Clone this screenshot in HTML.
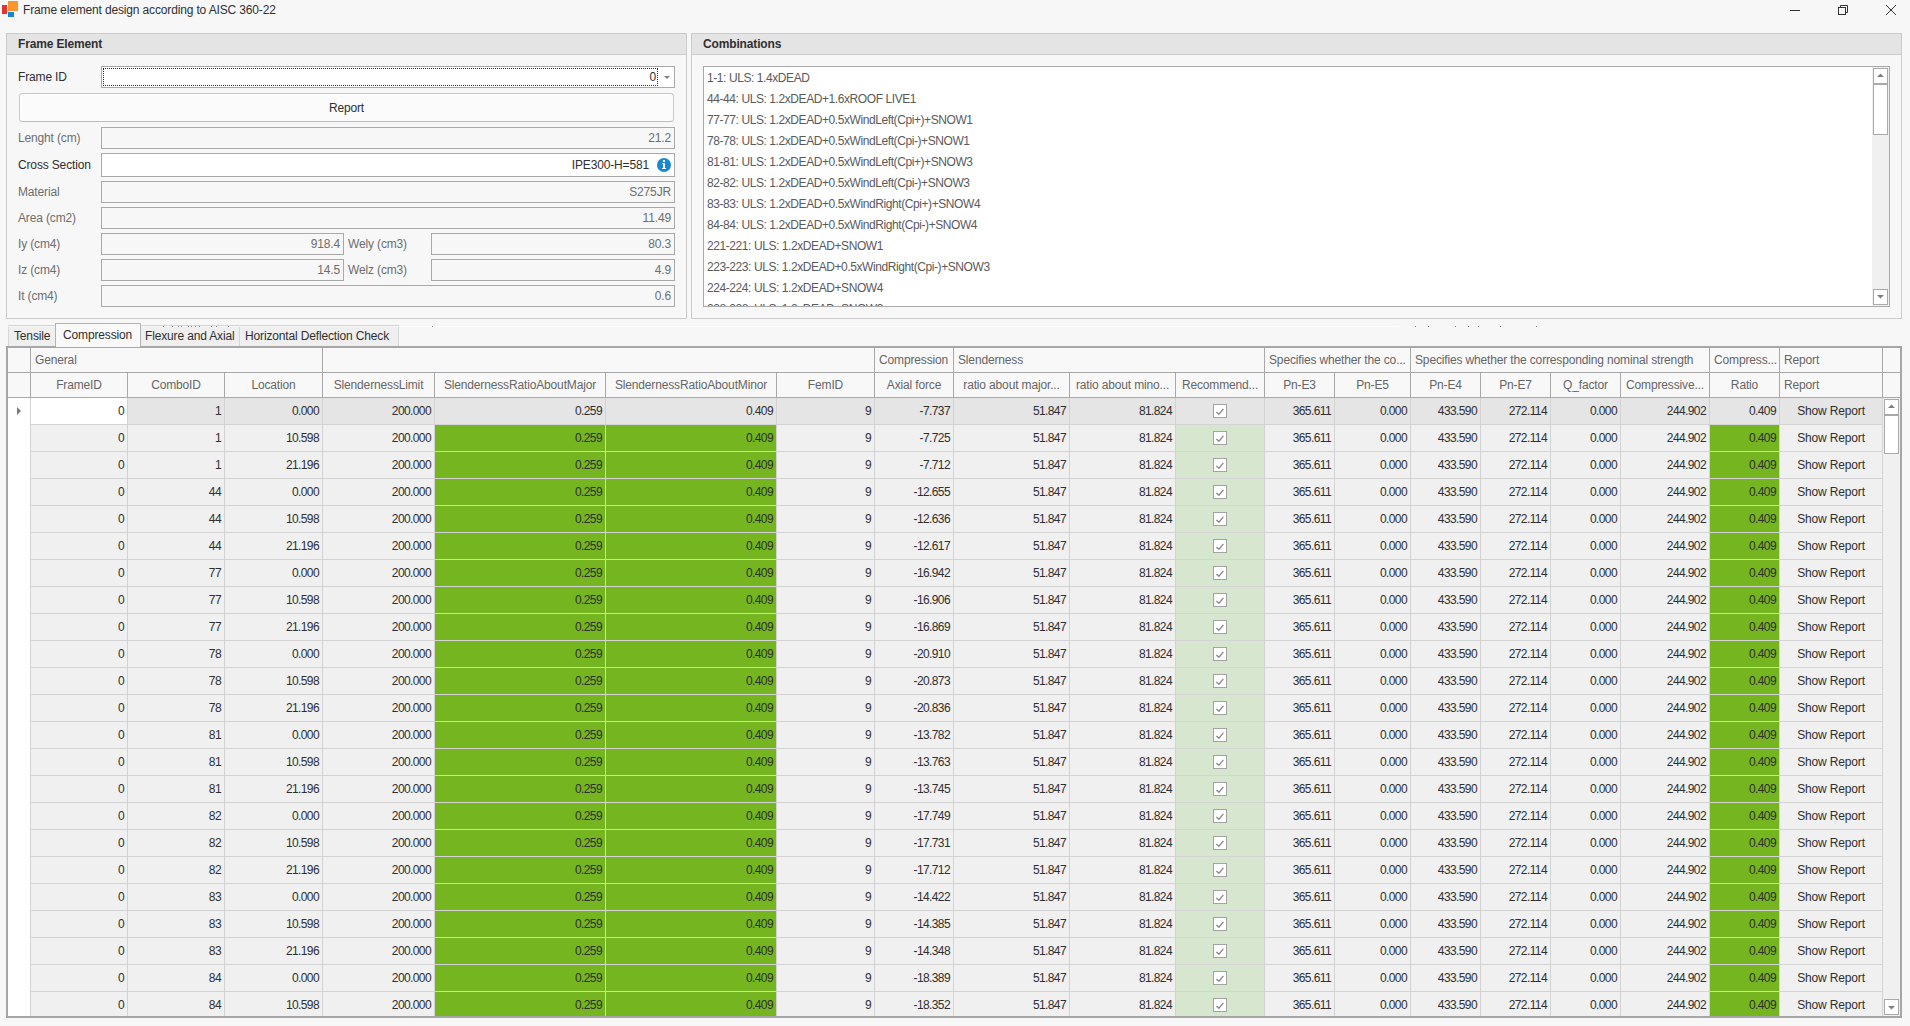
<!DOCTYPE html>
<html><head><meta charset="utf-8"><title>Frame element design according to AISC 360-22</title>
<style>
html,body{margin:0;padding:0;}
body{width:1910px;height:1026px;overflow:hidden;position:relative;background:#f7f7f7;font-family:"Liberation Sans",sans-serif;font-size:12px;color:#2f2f2f;}
.r{position:absolute;}
.t{position:absolute;height:16px;line-height:16px;white-space:nowrap;overflow:visible;letter-spacing:-0.15px;}
.b{font-weight:bold;}
svg{position:absolute;}
</style></head><body>

<div class="r" style="left:2px;top:5px;width:5px;height:9px;background:#e8312f;"></div>
<div class="r" style="left:8px;top:1px;width:10px;height:10px;background:#f7962f;"></div>
<div class="r" style="left:8px;top:12px;width:6px;height:5px;background:#1b86cb;"></div>
<div class="t " style="top:2px;left:23px;color:#303030;">Frame element design according to AISC 360-22</div>
<div class="r" style="left:1790px;top:10px;width:10px;height:1px;background:#333333;"></div>
<svg style="left:1830px;top:0px" width="80" height="30" viewBox="0 0 80 30"><rect x="8.5" y="7.5" width="7" height="7" fill="none" stroke="#333" stroke-width="1"/><path d="M10.5 7.5 V5.5 H17.5 V12.5 H15.5" fill="none" stroke="#333" stroke-width="1"/><path d="M56 5 L66 15 M66 5 L56 15" stroke="#333" stroke-width="1"/></svg>
<div class="r" style="left:6px;top:33px;width:681px;height:286px;background:#f7f7f7;box-sizing:border-box;border:1px solid #cbcbcb;"></div>
<div class="r" style="left:7px;top:34px;width:679px;height:20px;background:#e4e4e4;"></div>
<div class="r" style="left:7px;top:54px;width:679px;height:1px;background:#cbcbcb;"></div>
<div class="t b" style="top:36px;left:18px;color:#303030;">Frame Element</div>
<div class="t " style="top:69px;left:18px;color:#2f2f2f;">Frame ID</div>
<div class="r" style="left:101px;top:66px;width:574px;height:22px;background:#ffffff;box-sizing:border-box;border:1px solid #a9a9a9;"></div>
<div class="r" style="left:103px;top:68px;width:555px;height:18px;box-sizing:border-box;border:1px dotted #333333;"></div>
<div class="t " style="top:69px;left:616px;width:40px;text-align:right;color:#2f2f2f;">0</div>
<svg style="left:663px;top:75px" width="8" height="5"><path d="M1 1 H7 L4 4 Z" fill="#808080"/></svg>
<div class="r" style="left:19px;top:93px;width:655px;height:29px;background:#fbfbfb;box-sizing:border-box;border:1px solid #c8c8c8;border-radius:3.5px;border-bottom-color:#bcbcbc;box-shadow:inset 1px 1px 0 #ffffff;"></div>
<div class="t " style="top:100px;left:19px;width:655px;text-align:center;color:#2f2f2f;">Report</div>
<div class="t " style="top:130px;left:18px;color:#6e6e6e;">Lenght (cm)</div>
<div class="r" style="left:101px;top:127px;width:574px;height:22px;background:#f7f7f7;box-sizing:border-box;border:1px solid #a9a9a9;"></div>
<div class="t " style="top:130px;left:471px;width:200px;text-align:right;color:#6e6e6e;">21.2</div>
<div class="t " style="top:157px;left:18px;color:#2f2f2f;">Cross Section</div>
<div class="r" style="left:101px;top:153px;width:574px;height:24px;background:#ffffff;box-sizing:border-box;border:1px solid #a9a9a9;"></div>
<div class="t " style="top:157px;left:449px;width:200px;text-align:right;color:#2f2f2f;">IPE300-H=581</div>
<div class="t " style="top:184px;left:18px;color:#6e6e6e;">Material</div>
<div class="r" style="left:101px;top:181px;width:574px;height:22px;background:#f7f7f7;box-sizing:border-box;border:1px solid #a9a9a9;"></div>
<div class="t " style="top:184px;left:471px;width:200px;text-align:right;color:#6e6e6e;">S275JR</div>
<div class="t " style="top:210px;left:18px;color:#6e6e6e;">Area (cm2)</div>
<div class="r" style="left:101px;top:207px;width:574px;height:22px;background:#f7f7f7;box-sizing:border-box;border:1px solid #a9a9a9;"></div>
<div class="t " style="top:210px;left:471px;width:200px;text-align:right;color:#6e6e6e;">11.49</div>
<div class="t " style="top:288px;left:18px;color:#6e6e6e;">It (cm4)</div>
<div class="r" style="left:101px;top:285px;width:574px;height:22px;background:#f7f7f7;box-sizing:border-box;border:1px solid #a9a9a9;"></div>
<div class="t " style="top:288px;left:471px;width:200px;text-align:right;color:#6e6e6e;">0.6</div>
<svg style="left:657px;top:158px" width="14" height="14" viewBox="0 0 14 14"><circle cx="7" cy="7" r="7" fill="#1b87d0"/><rect x="6" y="2" width="2" height="2" fill="#fff"/><path d="M5 5 H8 V10 H9 V11 H5 V10 H6 V6 H5 Z" fill="#fff"/></svg>
<div class="t " style="top:236px;left:18px;color:#6e6e6e;">Iy (cm4)</div>
<div class="r" style="left:101px;top:233px;width:243px;height:22px;background:#f7f7f7;box-sizing:border-box;border:1px solid #a9a9a9;"></div>
<div class="t " style="top:236px;left:240px;width:100px;text-align:right;color:#6e6e6e;">918.4</div>
<div class="t " style="top:236px;left:348px;color:#6e6e6e;">Wely (cm3)</div>
<div class="r" style="left:431px;top:233px;width:244px;height:22px;background:#f7f7f7;box-sizing:border-box;border:1px solid #a9a9a9;"></div>
<div class="t " style="top:236px;left:571px;width:100px;text-align:right;color:#6e6e6e;">80.3</div>
<div class="t " style="top:262px;left:18px;color:#6e6e6e;">Iz (cm4)</div>
<div class="r" style="left:101px;top:259px;width:243px;height:22px;background:#f7f7f7;box-sizing:border-box;border:1px solid #a9a9a9;"></div>
<div class="t " style="top:262px;left:240px;width:100px;text-align:right;color:#6e6e6e;">14.5</div>
<div class="t " style="top:262px;left:348px;color:#6e6e6e;">Welz (cm3)</div>
<div class="r" style="left:431px;top:259px;width:244px;height:22px;background:#f7f7f7;box-sizing:border-box;border:1px solid #a9a9a9;"></div>
<div class="t " style="top:262px;left:571px;width:100px;text-align:right;color:#6e6e6e;">4.9</div>
<div class="r" style="left:691px;top:33px;width:1211px;height:286px;background:#f7f7f7;box-sizing:border-box;border:1px solid #cbcbcb;"></div>
<div class="r" style="left:692px;top:34px;width:1209px;height:20px;background:#e4e4e4;"></div>
<div class="r" style="left:692px;top:54px;width:1209px;height:1px;background:#cbcbcb;"></div>
<div class="t b" style="top:36px;left:703px;color:#303030;">Combinations</div>
<div class="r" style="left:703px;top:66px;width:1187px;height:241px;background:#ffffff;box-sizing:border-box;border:1px solid #a9a9a9;"></div>
<div class="r" style="left:704px;top:67px;width:1168px;height:239px;overflow:hidden;">
<div class="t" style="left:3px;top:3px;color:#5a5a5a;letter-spacing:-0.42px;">1-1: ULS: 1.4xDEAD</div>
<div class="t" style="left:3px;top:24px;color:#5a5a5a;letter-spacing:-0.42px;">44-44: ULS: 1.2xDEAD+1.6xROOF LIVE1</div>
<div class="t" style="left:3px;top:45px;color:#5a5a5a;letter-spacing:-0.42px;">77-77: ULS: 1.2xDEAD+0.5xWindLeft(Cpi+)+SNOW1</div>
<div class="t" style="left:3px;top:66px;color:#5a5a5a;letter-spacing:-0.42px;">78-78: ULS: 1.2xDEAD+0.5xWindLeft(Cpi-)+SNOW1</div>
<div class="t" style="left:3px;top:87px;color:#5a5a5a;letter-spacing:-0.42px;">81-81: ULS: 1.2xDEAD+0.5xWindLeft(Cpi+)+SNOW3</div>
<div class="t" style="left:3px;top:108px;color:#5a5a5a;letter-spacing:-0.42px;">82-82: ULS: 1.2xDEAD+0.5xWindLeft(Cpi-)+SNOW3</div>
<div class="t" style="left:3px;top:129px;color:#5a5a5a;letter-spacing:-0.42px;">83-83: ULS: 1.2xDEAD+0.5xWindRight(Cpi+)+SNOW4</div>
<div class="t" style="left:3px;top:150px;color:#5a5a5a;letter-spacing:-0.42px;">84-84: ULS: 1.2xDEAD+0.5xWindRight(Cpi-)+SNOW4</div>
<div class="t" style="left:3px;top:171px;color:#5a5a5a;letter-spacing:-0.42px;">221-221: ULS: 1.2xDEAD+SNOW1</div>
<div class="t" style="left:3px;top:192px;color:#5a5a5a;letter-spacing:-0.42px;">223-223: ULS: 1.2xDEAD+0.5xWindRight(Cpi-)+SNOW3</div>
<div class="t" style="left:3px;top:213px;color:#5a5a5a;letter-spacing:-0.42px;">224-224: ULS: 1.2xDEAD+SNOW4</div>
<div class="t" style="left:3px;top:234px;color:#5a5a5a;letter-spacing:-0.42px;">228-228: ULS: 1.2xDEAD+SNOW3</div>
</div>
<div class="r" style="left:1872px;top:67px;width:17px;height:239px;background:#f0f0f0;"></div>
<div class="r" style="left:1873px;top:68px;width:15px;height:16px;background:#ffffff;box-sizing:border-box;border:1px solid #a9a9a9;"></div>
<div class="r" style="left:1873px;top:84px;width:15px;height:51px;background:#ffffff;box-sizing:border-box;border:1px solid #a9a9a9;"></div>
<div class="r" style="left:1873px;top:289px;width:15px;height:16px;background:#ffffff;box-sizing:border-box;border:1px solid #a9a9a9;"></div>
<svg style="left:1876px;top:72px" width="10" height="6"><path d="M1 5 H8 L4.5 1.5 Z" fill="#808080"/></svg>
<svg style="left:1876px;top:294px" width="10" height="6"><path d="M1 1 H8 L4.5 4.5 Z" fill="#808080"/></svg>
<div class="r" style="left:8px;top:325px;width:391px;height:1px;background:#d4d4d4;"></div>
<div class="r" style="left:399px;top:326px;width:1000px;height:1px;background:#fdfdfd;"></div>
<div class="r" style="left:163px;top:326px;width:1px;height:1px;background:#8a8a8a;"></div>
<div class="r" style="left:172px;top:326px;width:1px;height:1px;background:#8a8a8a;"></div>
<div class="r" style="left:178px;top:326px;width:1px;height:1px;background:#8a8a8a;"></div>
<div class="r" style="left:181px;top:326px;width:1px;height:1px;background:#8a8a8a;"></div>
<div class="r" style="left:188px;top:326px;width:1px;height:1px;background:#8a8a8a;"></div>
<div class="r" style="left:191px;top:326px;width:1px;height:1px;background:#8a8a8a;"></div>
<div class="r" style="left:195px;top:326px;width:1px;height:1px;background:#8a8a8a;"></div>
<div class="r" style="left:199px;top:326px;width:1px;height:1px;background:#8a8a8a;"></div>
<div class="r" style="left:211px;top:326px;width:1px;height:1px;background:#8a8a8a;"></div>
<div class="r" style="left:216px;top:326px;width:1px;height:1px;background:#8a8a8a;"></div>
<div class="r" style="left:228px;top:326px;width:1px;height:1px;background:#8a8a8a;"></div>
<div class="r" style="left:432px;top:326px;width:1px;height:1px;background:#8a8a8a;"></div>
<div class="r" style="left:1415px;top:326px;width:1px;height:1px;background:#8a8a8a;"></div>
<div class="r" style="left:1428px;top:326px;width:1px;height:1px;background:#8a8a8a;"></div>
<div class="r" style="left:1455px;top:326px;width:1px;height:1px;background:#8a8a8a;"></div>
<div class="r" style="left:1468px;top:326px;width:1px;height:1px;background:#8a8a8a;"></div>
<div class="r" style="left:1478px;top:326px;width:1px;height:1px;background:#8a8a8a;"></div>
<div class="r" style="left:1500px;top:326px;width:1px;height:1px;background:#8a8a8a;"></div>
<div class="r" style="left:1536px;top:326px;width:1px;height:1px;background:#8a8a8a;"></div>
<div class="r" style="left:8px;top:327px;width:48px;height:20px;background:#efefef;box-sizing:border-box;border:1px solid #d6d6d6;border-bottom:none;border-top:none;"></div>
<div class="t " style="top:328px;left:14px;color:#2f2f2f;">Tensile</div>
<div class="r" style="left:140px;top:327px;width:100px;height:20px;background:#efefef;box-sizing:border-box;border:1px solid #d6d6d6;border-bottom:none;border-left:none;border-top:none;"></div>
<div class="t " style="top:328px;left:145px;color:#2f2f2f;">Flexure and Axial</div>
<div class="r" style="left:239px;top:327px;width:160px;height:20px;background:#efefef;box-sizing:border-box;border:1px solid #d6d6d6;border-bottom:none;border-top:none;"></div>
<div class="t " style="top:328px;left:245px;color:#2f2f2f;">Horizontal Deflection Check</div>
<div class="r" style="left:55px;top:323px;width:86px;height:25px;background:#f9f9f9;box-sizing:border-box;border:1px solid #b4b4b4;border-bottom:none;"></div>
<div class="t " style="top:327px;left:63px;color:#2f2f2f;">Compression</div>
<div class="r" style="left:6px;top:346px;width:1896px;height:672px;box-sizing:border-box;border:2px solid #a6a6a6;background:#ffffff;"></div>
<div class="r" style="left:56px;top:346px;width:84px;height:1px;background:#f9f9f9;"></div>
<div class="r" style="left:8px;top:348px;width:1892px;height:49px;background:#f8f8f8;"></div>
<div class="r" style="left:8px;top:372px;width:1892px;height:1px;background:#a9a9a9;"></div>
<div class="r" style="left:8px;top:397px;width:1892px;height:1px;background:#a9a9a9;"></div>
<div class="r" style="left:30px;top:348px;width:1px;height:24px;background:#a9a9a9;"></div>
<div class="r" style="left:322px;top:348px;width:1px;height:24px;background:#a9a9a9;"></div>
<div class="t " style="top:352px;left:35px;color:#666666;">General</div>
<div class="r" style="left:874px;top:348px;width:1px;height:24px;background:#a9a9a9;"></div>
<div class="r" style="left:953px;top:348px;width:1px;height:24px;background:#a9a9a9;"></div>
<div class="t " style="top:352px;left:879px;color:#666666;">Compression</div>
<div class="r" style="left:1264px;top:348px;width:1px;height:24px;background:#a9a9a9;"></div>
<div class="t " style="top:352px;left:958px;color:#666666;">Slenderness</div>
<div class="r" style="left:1410px;top:348px;width:1px;height:24px;background:#a9a9a9;"></div>
<div class="t " style="top:352px;left:1269px;color:#666666;">Specifies whether the co...</div>
<div class="r" style="left:1709px;top:348px;width:1px;height:24px;background:#a9a9a9;"></div>
<div class="t " style="top:352px;left:1415px;color:#666666;">Specifies whether the corresponding nominal strength</div>
<div class="r" style="left:1779px;top:348px;width:1px;height:24px;background:#a9a9a9;"></div>
<div class="t " style="top:352px;left:1714px;color:#666666;">Compress...</div>
<div class="r" style="left:1882px;top:348px;width:1px;height:24px;background:#a9a9a9;"></div>
<div class="t " style="top:352px;left:1784px;color:#666666;">Report</div>
<div class="r" style="left:30px;top:373px;width:1px;height:24px;background:#a9a9a9;"></div>
<div class="r" style="left:127px;top:373px;width:1px;height:24px;background:#a9a9a9;"></div>
<div class="r" style="left:224px;top:373px;width:1px;height:24px;background:#a9a9a9;"></div>
<div class="r" style="left:322px;top:373px;width:1px;height:24px;background:#a9a9a9;"></div>
<div class="r" style="left:434px;top:373px;width:1px;height:24px;background:#a9a9a9;"></div>
<div class="r" style="left:605px;top:373px;width:1px;height:24px;background:#a9a9a9;"></div>
<div class="r" style="left:776px;top:373px;width:1px;height:24px;background:#a9a9a9;"></div>
<div class="r" style="left:874px;top:373px;width:1px;height:24px;background:#a9a9a9;"></div>
<div class="r" style="left:953px;top:373px;width:1px;height:24px;background:#a9a9a9;"></div>
<div class="r" style="left:1069px;top:373px;width:1px;height:24px;background:#a9a9a9;"></div>
<div class="r" style="left:1175px;top:373px;width:1px;height:24px;background:#a9a9a9;"></div>
<div class="r" style="left:1264px;top:373px;width:1px;height:24px;background:#a9a9a9;"></div>
<div class="r" style="left:1334px;top:373px;width:1px;height:24px;background:#a9a9a9;"></div>
<div class="r" style="left:1410px;top:373px;width:1px;height:24px;background:#a9a9a9;"></div>
<div class="r" style="left:1480px;top:373px;width:1px;height:24px;background:#a9a9a9;"></div>
<div class="r" style="left:1550px;top:373px;width:1px;height:24px;background:#a9a9a9;"></div>
<div class="r" style="left:1620px;top:373px;width:1px;height:24px;background:#a9a9a9;"></div>
<div class="r" style="left:1709px;top:373px;width:1px;height:24px;background:#a9a9a9;"></div>
<div class="r" style="left:1779px;top:373px;width:1px;height:24px;background:#a9a9a9;"></div>
<div class="r" style="left:1882px;top:373px;width:1px;height:24px;background:#a9a9a9;"></div>
<div class="t " style="top:377px;left:31px;width:96px;text-align:center;color:#666666;">FrameID</div>
<div class="t " style="top:377px;left:128px;width:96px;text-align:center;color:#666666;">ComboID</div>
<div class="t " style="top:377px;left:225px;width:97px;text-align:center;color:#666666;">Location</div>
<div class="t " style="top:377px;left:323px;width:111px;text-align:center;color:#666666;">SlendernessLimit</div>
<div class="t " style="top:377px;left:435px;width:170px;text-align:center;color:#666666;">SlendernessRatioAboutMajor</div>
<div class="t " style="top:377px;left:606px;width:170px;text-align:center;color:#666666;">SlendernessRatioAboutMinor</div>
<div class="t " style="top:377px;left:777px;width:97px;text-align:center;color:#666666;">FemID</div>
<div class="t " style="top:377px;left:875px;width:78px;text-align:center;color:#666666;">Axial force</div>
<div class="t " style="top:377px;left:954px;width:115px;text-align:center;color:#666666;">ratio about major...</div>
<div class="t " style="top:377px;left:1070px;width:105px;text-align:center;color:#666666;">ratio about mino...</div>
<div class="t " style="top:377px;left:1176px;width:88px;text-align:center;color:#666666;">Recommend...</div>
<div class="t " style="top:377px;left:1265px;width:69px;text-align:center;color:#666666;">Pn-E3</div>
<div class="t " style="top:377px;left:1335px;width:75px;text-align:center;color:#666666;">Pn-E5</div>
<div class="t " style="top:377px;left:1411px;width:69px;text-align:center;color:#666666;">Pn-E4</div>
<div class="t " style="top:377px;left:1481px;width:69px;text-align:center;color:#666666;">Pn-E7</div>
<div class="t " style="top:377px;left:1551px;width:69px;text-align:center;color:#666666;">Q_factor</div>
<div class="t " style="top:377px;left:1621px;width:88px;text-align:center;color:#666666;">Compressive...</div>
<div class="t " style="top:377px;left:1710px;width:69px;text-align:center;color:#666666;">Ratio</div>
<div class="t " style="top:377px;left:1784px;color:#666666;">Report</div>
<div class="r" style="left:8px;top:398px;width:22px;height:618px;background:#ffffff;"></div>
<div class="r" style="left:31px;top:398px;width:1851px;height:618px;background:#f0f0f0;"></div>
<div class="r" style="left:1883px;top:398px;width:17px;height:618px;background:#f0f0f0;"></div>
<div class="r" style="left:31px;top:398px;width:1851px;height:26px;background:#e5e5e5;"></div>
<div class="r" style="left:31px;top:398px;width:96px;height:26px;background:#ffffff;"></div>
<div class="r" style="left:435px;top:425px;width:170px;height:591px;background:#74b520;"></div>
<div class="r" style="left:606px;top:425px;width:170px;height:591px;background:#74b520;"></div>
<div class="r" style="left:1710px;top:425px;width:69px;height:591px;background:#74b520;"></div>
<div class="r" style="left:1176px;top:425px;width:88px;height:591px;background:#d7e6cf;"></div>
<div class="r" style="left:30px;top:398px;width:1px;height:618px;background:#d3d3d3;"></div>
<div class="r" style="left:127px;top:398px;width:1px;height:618px;background:#d3d3d3;"></div>
<div class="r" style="left:224px;top:398px;width:1px;height:618px;background:#d3d3d3;"></div>
<div class="r" style="left:322px;top:398px;width:1px;height:618px;background:#d3d3d3;"></div>
<div class="r" style="left:434px;top:398px;width:1px;height:618px;background:#d3d3d3;"></div>
<div class="r" style="left:605px;top:398px;width:1px;height:618px;background:#d3d3d3;"></div>
<div class="r" style="left:776px;top:398px;width:1px;height:618px;background:#d3d3d3;"></div>
<div class="r" style="left:874px;top:398px;width:1px;height:618px;background:#d3d3d3;"></div>
<div class="r" style="left:953px;top:398px;width:1px;height:618px;background:#d3d3d3;"></div>
<div class="r" style="left:1069px;top:398px;width:1px;height:618px;background:#d3d3d3;"></div>
<div class="r" style="left:1175px;top:398px;width:1px;height:618px;background:#d3d3d3;"></div>
<div class="r" style="left:1264px;top:398px;width:1px;height:618px;background:#d3d3d3;"></div>
<div class="r" style="left:1334px;top:398px;width:1px;height:618px;background:#d3d3d3;"></div>
<div class="r" style="left:1410px;top:398px;width:1px;height:618px;background:#d3d3d3;"></div>
<div class="r" style="left:1480px;top:398px;width:1px;height:618px;background:#d3d3d3;"></div>
<div class="r" style="left:1550px;top:398px;width:1px;height:618px;background:#d3d3d3;"></div>
<div class="r" style="left:1620px;top:398px;width:1px;height:618px;background:#d3d3d3;"></div>
<div class="r" style="left:1709px;top:398px;width:1px;height:618px;background:#d3d3d3;"></div>
<div class="r" style="left:1779px;top:398px;width:1px;height:618px;background:#d3d3d3;"></div>
<div class="r" style="left:1882px;top:398px;width:1px;height:618px;background:#d3d3d3;"></div>
<div class="r" style="left:31px;top:424px;width:1851px;height:1px;background:#d3d3d3;"></div>
<div class="r" style="left:31px;top:451px;width:1851px;height:1px;background:#d3d3d3;"></div>
<div class="r" style="left:31px;top:478px;width:1851px;height:1px;background:#d3d3d3;"></div>
<div class="r" style="left:31px;top:505px;width:1851px;height:1px;background:#d3d3d3;"></div>
<div class="r" style="left:31px;top:532px;width:1851px;height:1px;background:#d3d3d3;"></div>
<div class="r" style="left:31px;top:559px;width:1851px;height:1px;background:#d3d3d3;"></div>
<div class="r" style="left:31px;top:586px;width:1851px;height:1px;background:#d3d3d3;"></div>
<div class="r" style="left:31px;top:613px;width:1851px;height:1px;background:#d3d3d3;"></div>
<div class="r" style="left:31px;top:640px;width:1851px;height:1px;background:#d3d3d3;"></div>
<div class="r" style="left:31px;top:667px;width:1851px;height:1px;background:#d3d3d3;"></div>
<div class="r" style="left:31px;top:694px;width:1851px;height:1px;background:#d3d3d3;"></div>
<div class="r" style="left:31px;top:721px;width:1851px;height:1px;background:#d3d3d3;"></div>
<div class="r" style="left:31px;top:748px;width:1851px;height:1px;background:#d3d3d3;"></div>
<div class="r" style="left:31px;top:775px;width:1851px;height:1px;background:#d3d3d3;"></div>
<div class="r" style="left:31px;top:802px;width:1851px;height:1px;background:#d3d3d3;"></div>
<div class="r" style="left:31px;top:829px;width:1851px;height:1px;background:#d3d3d3;"></div>
<div class="r" style="left:31px;top:856px;width:1851px;height:1px;background:#d3d3d3;"></div>
<div class="r" style="left:31px;top:883px;width:1851px;height:1px;background:#d3d3d3;"></div>
<div class="r" style="left:31px;top:910px;width:1851px;height:1px;background:#d3d3d3;"></div>
<div class="r" style="left:31px;top:937px;width:1851px;height:1px;background:#d3d3d3;"></div>
<div class="r" style="left:31px;top:964px;width:1851px;height:1px;background:#d3d3d3;"></div>
<div class="r" style="left:31px;top:991px;width:1851px;height:1px;background:#d3d3d3;"></div>
<div class="t " style="top:403px;left:29px;width:95px;text-align:right;color:#2f2f2f;letter-spacing:-0.6px;margin-right:-0.5px;">0</div>
<div class="t " style="top:403px;left:126px;width:95px;text-align:right;color:#2f2f2f;letter-spacing:-0.6px;margin-right:-0.5px;">1</div>
<div class="t " style="top:403px;left:223px;width:96px;text-align:right;color:#2f2f2f;letter-spacing:-0.6px;margin-right:-0.5px;">0.000</div>
<div class="t " style="top:403px;left:321px;width:110px;text-align:right;color:#2f2f2f;letter-spacing:-0.6px;margin-right:-0.5px;">200.000</div>
<div class="t " style="top:403px;left:433px;width:169px;text-align:right;color:#2f2f2f;letter-spacing:-0.6px;margin-right:-0.5px;">0.259</div>
<div class="t " style="top:403px;left:604px;width:169px;text-align:right;color:#2f2f2f;letter-spacing:-0.6px;margin-right:-0.5px;">0.409</div>
<div class="t " style="top:403px;left:775px;width:96px;text-align:right;color:#2f2f2f;letter-spacing:-0.6px;margin-right:-0.5px;">9</div>
<div class="t " style="top:403px;left:873px;width:77px;text-align:right;color:#2f2f2f;letter-spacing:-0.6px;margin-right:-0.5px;">-7.737</div>
<div class="t " style="top:403px;left:952px;width:114px;text-align:right;color:#2f2f2f;letter-spacing:-0.6px;margin-right:-0.5px;">51.847</div>
<div class="t " style="top:403px;left:1068px;width:104px;text-align:right;color:#2f2f2f;letter-spacing:-0.6px;margin-right:-0.5px;">81.824</div>
<div class="r" style="left:1213px;top:404px;width:14px;height:14px;box-sizing:border-box;border:1px solid #a3a3a3;background:#fff;"></div>
<svg style="left:1213px;top:404px" width="14" height="14"><path d="M3.4 7.9 L5.9 10.2 L10.4 4.8" fill="none" stroke="#8a8a8a" stroke-width="1.3"/></svg>
<div class="t " style="top:403px;left:1263px;width:68px;text-align:right;color:#2f2f2f;letter-spacing:-0.6px;margin-right:-0.5px;">365.611</div>
<div class="t " style="top:403px;left:1333px;width:74px;text-align:right;color:#2f2f2f;letter-spacing:-0.6px;margin-right:-0.5px;">0.000</div>
<div class="t " style="top:403px;left:1409px;width:68px;text-align:right;color:#2f2f2f;letter-spacing:-0.6px;margin-right:-0.5px;">433.590</div>
<div class="t " style="top:403px;left:1479px;width:68px;text-align:right;color:#2f2f2f;letter-spacing:-0.6px;margin-right:-0.5px;">272.114</div>
<div class="t " style="top:403px;left:1549px;width:68px;text-align:right;color:#2f2f2f;letter-spacing:-0.6px;margin-right:-0.5px;">0.000</div>
<div class="t " style="top:403px;left:1619px;width:87px;text-align:right;color:#2f2f2f;letter-spacing:-0.6px;margin-right:-0.5px;">244.902</div>
<div class="t " style="top:403px;left:1708px;width:68px;text-align:right;color:#2f2f2f;letter-spacing:-0.6px;margin-right:-0.5px;">0.409</div>
<div class="t " style="top:403px;left:1780px;width:102px;text-align:center;color:#2f2f2f;">Show Report</div>
<div class="t " style="top:430px;left:29px;width:95px;text-align:right;color:#2f2f2f;letter-spacing:-0.6px;margin-right:-0.5px;">0</div>
<div class="t " style="top:430px;left:126px;width:95px;text-align:right;color:#2f2f2f;letter-spacing:-0.6px;margin-right:-0.5px;">1</div>
<div class="t " style="top:430px;left:223px;width:96px;text-align:right;color:#2f2f2f;letter-spacing:-0.6px;margin-right:-0.5px;">10.598</div>
<div class="t " style="top:430px;left:321px;width:110px;text-align:right;color:#2f2f2f;letter-spacing:-0.6px;margin-right:-0.5px;">200.000</div>
<div class="t " style="top:430px;left:433px;width:169px;text-align:right;color:#2f2f2f;letter-spacing:-0.6px;margin-right:-0.5px;">0.259</div>
<div class="t " style="top:430px;left:604px;width:169px;text-align:right;color:#2f2f2f;letter-spacing:-0.6px;margin-right:-0.5px;">0.409</div>
<div class="t " style="top:430px;left:775px;width:96px;text-align:right;color:#2f2f2f;letter-spacing:-0.6px;margin-right:-0.5px;">9</div>
<div class="t " style="top:430px;left:873px;width:77px;text-align:right;color:#2f2f2f;letter-spacing:-0.6px;margin-right:-0.5px;">-7.725</div>
<div class="t " style="top:430px;left:952px;width:114px;text-align:right;color:#2f2f2f;letter-spacing:-0.6px;margin-right:-0.5px;">51.847</div>
<div class="t " style="top:430px;left:1068px;width:104px;text-align:right;color:#2f2f2f;letter-spacing:-0.6px;margin-right:-0.5px;">81.824</div>
<div class="r" style="left:1213px;top:431px;width:14px;height:14px;box-sizing:border-box;border:1px solid #a3a3a3;background:#fff;"></div>
<svg style="left:1213px;top:431px" width="14" height="14"><path d="M3.4 7.9 L5.9 10.2 L10.4 4.8" fill="none" stroke="#8a8a8a" stroke-width="1.3"/></svg>
<div class="t " style="top:430px;left:1263px;width:68px;text-align:right;color:#2f2f2f;letter-spacing:-0.6px;margin-right:-0.5px;">365.611</div>
<div class="t " style="top:430px;left:1333px;width:74px;text-align:right;color:#2f2f2f;letter-spacing:-0.6px;margin-right:-0.5px;">0.000</div>
<div class="t " style="top:430px;left:1409px;width:68px;text-align:right;color:#2f2f2f;letter-spacing:-0.6px;margin-right:-0.5px;">433.590</div>
<div class="t " style="top:430px;left:1479px;width:68px;text-align:right;color:#2f2f2f;letter-spacing:-0.6px;margin-right:-0.5px;">272.114</div>
<div class="t " style="top:430px;left:1549px;width:68px;text-align:right;color:#2f2f2f;letter-spacing:-0.6px;margin-right:-0.5px;">0.000</div>
<div class="t " style="top:430px;left:1619px;width:87px;text-align:right;color:#2f2f2f;letter-spacing:-0.6px;margin-right:-0.5px;">244.902</div>
<div class="t " style="top:430px;left:1708px;width:68px;text-align:right;color:#2f2f2f;letter-spacing:-0.6px;margin-right:-0.5px;">0.409</div>
<div class="t " style="top:430px;left:1780px;width:102px;text-align:center;color:#2f2f2f;">Show Report</div>
<div class="t " style="top:457px;left:29px;width:95px;text-align:right;color:#2f2f2f;letter-spacing:-0.6px;margin-right:-0.5px;">0</div>
<div class="t " style="top:457px;left:126px;width:95px;text-align:right;color:#2f2f2f;letter-spacing:-0.6px;margin-right:-0.5px;">1</div>
<div class="t " style="top:457px;left:223px;width:96px;text-align:right;color:#2f2f2f;letter-spacing:-0.6px;margin-right:-0.5px;">21.196</div>
<div class="t " style="top:457px;left:321px;width:110px;text-align:right;color:#2f2f2f;letter-spacing:-0.6px;margin-right:-0.5px;">200.000</div>
<div class="t " style="top:457px;left:433px;width:169px;text-align:right;color:#2f2f2f;letter-spacing:-0.6px;margin-right:-0.5px;">0.259</div>
<div class="t " style="top:457px;left:604px;width:169px;text-align:right;color:#2f2f2f;letter-spacing:-0.6px;margin-right:-0.5px;">0.409</div>
<div class="t " style="top:457px;left:775px;width:96px;text-align:right;color:#2f2f2f;letter-spacing:-0.6px;margin-right:-0.5px;">9</div>
<div class="t " style="top:457px;left:873px;width:77px;text-align:right;color:#2f2f2f;letter-spacing:-0.6px;margin-right:-0.5px;">-7.712</div>
<div class="t " style="top:457px;left:952px;width:114px;text-align:right;color:#2f2f2f;letter-spacing:-0.6px;margin-right:-0.5px;">51.847</div>
<div class="t " style="top:457px;left:1068px;width:104px;text-align:right;color:#2f2f2f;letter-spacing:-0.6px;margin-right:-0.5px;">81.824</div>
<div class="r" style="left:1213px;top:458px;width:14px;height:14px;box-sizing:border-box;border:1px solid #a3a3a3;background:#fff;"></div>
<svg style="left:1213px;top:458px" width="14" height="14"><path d="M3.4 7.9 L5.9 10.2 L10.4 4.8" fill="none" stroke="#8a8a8a" stroke-width="1.3"/></svg>
<div class="t " style="top:457px;left:1263px;width:68px;text-align:right;color:#2f2f2f;letter-spacing:-0.6px;margin-right:-0.5px;">365.611</div>
<div class="t " style="top:457px;left:1333px;width:74px;text-align:right;color:#2f2f2f;letter-spacing:-0.6px;margin-right:-0.5px;">0.000</div>
<div class="t " style="top:457px;left:1409px;width:68px;text-align:right;color:#2f2f2f;letter-spacing:-0.6px;margin-right:-0.5px;">433.590</div>
<div class="t " style="top:457px;left:1479px;width:68px;text-align:right;color:#2f2f2f;letter-spacing:-0.6px;margin-right:-0.5px;">272.114</div>
<div class="t " style="top:457px;left:1549px;width:68px;text-align:right;color:#2f2f2f;letter-spacing:-0.6px;margin-right:-0.5px;">0.000</div>
<div class="t " style="top:457px;left:1619px;width:87px;text-align:right;color:#2f2f2f;letter-spacing:-0.6px;margin-right:-0.5px;">244.902</div>
<div class="t " style="top:457px;left:1708px;width:68px;text-align:right;color:#2f2f2f;letter-spacing:-0.6px;margin-right:-0.5px;">0.409</div>
<div class="t " style="top:457px;left:1780px;width:102px;text-align:center;color:#2f2f2f;">Show Report</div>
<div class="t " style="top:484px;left:29px;width:95px;text-align:right;color:#2f2f2f;letter-spacing:-0.6px;margin-right:-0.5px;">0</div>
<div class="t " style="top:484px;left:126px;width:95px;text-align:right;color:#2f2f2f;letter-spacing:-0.6px;margin-right:-0.5px;">44</div>
<div class="t " style="top:484px;left:223px;width:96px;text-align:right;color:#2f2f2f;letter-spacing:-0.6px;margin-right:-0.5px;">0.000</div>
<div class="t " style="top:484px;left:321px;width:110px;text-align:right;color:#2f2f2f;letter-spacing:-0.6px;margin-right:-0.5px;">200.000</div>
<div class="t " style="top:484px;left:433px;width:169px;text-align:right;color:#2f2f2f;letter-spacing:-0.6px;margin-right:-0.5px;">0.259</div>
<div class="t " style="top:484px;left:604px;width:169px;text-align:right;color:#2f2f2f;letter-spacing:-0.6px;margin-right:-0.5px;">0.409</div>
<div class="t " style="top:484px;left:775px;width:96px;text-align:right;color:#2f2f2f;letter-spacing:-0.6px;margin-right:-0.5px;">9</div>
<div class="t " style="top:484px;left:873px;width:77px;text-align:right;color:#2f2f2f;letter-spacing:-0.6px;margin-right:-0.5px;">-12.655</div>
<div class="t " style="top:484px;left:952px;width:114px;text-align:right;color:#2f2f2f;letter-spacing:-0.6px;margin-right:-0.5px;">51.847</div>
<div class="t " style="top:484px;left:1068px;width:104px;text-align:right;color:#2f2f2f;letter-spacing:-0.6px;margin-right:-0.5px;">81.824</div>
<div class="r" style="left:1213px;top:485px;width:14px;height:14px;box-sizing:border-box;border:1px solid #a3a3a3;background:#fff;"></div>
<svg style="left:1213px;top:485px" width="14" height="14"><path d="M3.4 7.9 L5.9 10.2 L10.4 4.8" fill="none" stroke="#8a8a8a" stroke-width="1.3"/></svg>
<div class="t " style="top:484px;left:1263px;width:68px;text-align:right;color:#2f2f2f;letter-spacing:-0.6px;margin-right:-0.5px;">365.611</div>
<div class="t " style="top:484px;left:1333px;width:74px;text-align:right;color:#2f2f2f;letter-spacing:-0.6px;margin-right:-0.5px;">0.000</div>
<div class="t " style="top:484px;left:1409px;width:68px;text-align:right;color:#2f2f2f;letter-spacing:-0.6px;margin-right:-0.5px;">433.590</div>
<div class="t " style="top:484px;left:1479px;width:68px;text-align:right;color:#2f2f2f;letter-spacing:-0.6px;margin-right:-0.5px;">272.114</div>
<div class="t " style="top:484px;left:1549px;width:68px;text-align:right;color:#2f2f2f;letter-spacing:-0.6px;margin-right:-0.5px;">0.000</div>
<div class="t " style="top:484px;left:1619px;width:87px;text-align:right;color:#2f2f2f;letter-spacing:-0.6px;margin-right:-0.5px;">244.902</div>
<div class="t " style="top:484px;left:1708px;width:68px;text-align:right;color:#2f2f2f;letter-spacing:-0.6px;margin-right:-0.5px;">0.409</div>
<div class="t " style="top:484px;left:1780px;width:102px;text-align:center;color:#2f2f2f;">Show Report</div>
<div class="t " style="top:511px;left:29px;width:95px;text-align:right;color:#2f2f2f;letter-spacing:-0.6px;margin-right:-0.5px;">0</div>
<div class="t " style="top:511px;left:126px;width:95px;text-align:right;color:#2f2f2f;letter-spacing:-0.6px;margin-right:-0.5px;">44</div>
<div class="t " style="top:511px;left:223px;width:96px;text-align:right;color:#2f2f2f;letter-spacing:-0.6px;margin-right:-0.5px;">10.598</div>
<div class="t " style="top:511px;left:321px;width:110px;text-align:right;color:#2f2f2f;letter-spacing:-0.6px;margin-right:-0.5px;">200.000</div>
<div class="t " style="top:511px;left:433px;width:169px;text-align:right;color:#2f2f2f;letter-spacing:-0.6px;margin-right:-0.5px;">0.259</div>
<div class="t " style="top:511px;left:604px;width:169px;text-align:right;color:#2f2f2f;letter-spacing:-0.6px;margin-right:-0.5px;">0.409</div>
<div class="t " style="top:511px;left:775px;width:96px;text-align:right;color:#2f2f2f;letter-spacing:-0.6px;margin-right:-0.5px;">9</div>
<div class="t " style="top:511px;left:873px;width:77px;text-align:right;color:#2f2f2f;letter-spacing:-0.6px;margin-right:-0.5px;">-12.636</div>
<div class="t " style="top:511px;left:952px;width:114px;text-align:right;color:#2f2f2f;letter-spacing:-0.6px;margin-right:-0.5px;">51.847</div>
<div class="t " style="top:511px;left:1068px;width:104px;text-align:right;color:#2f2f2f;letter-spacing:-0.6px;margin-right:-0.5px;">81.824</div>
<div class="r" style="left:1213px;top:512px;width:14px;height:14px;box-sizing:border-box;border:1px solid #a3a3a3;background:#fff;"></div>
<svg style="left:1213px;top:512px" width="14" height="14"><path d="M3.4 7.9 L5.9 10.2 L10.4 4.8" fill="none" stroke="#8a8a8a" stroke-width="1.3"/></svg>
<div class="t " style="top:511px;left:1263px;width:68px;text-align:right;color:#2f2f2f;letter-spacing:-0.6px;margin-right:-0.5px;">365.611</div>
<div class="t " style="top:511px;left:1333px;width:74px;text-align:right;color:#2f2f2f;letter-spacing:-0.6px;margin-right:-0.5px;">0.000</div>
<div class="t " style="top:511px;left:1409px;width:68px;text-align:right;color:#2f2f2f;letter-spacing:-0.6px;margin-right:-0.5px;">433.590</div>
<div class="t " style="top:511px;left:1479px;width:68px;text-align:right;color:#2f2f2f;letter-spacing:-0.6px;margin-right:-0.5px;">272.114</div>
<div class="t " style="top:511px;left:1549px;width:68px;text-align:right;color:#2f2f2f;letter-spacing:-0.6px;margin-right:-0.5px;">0.000</div>
<div class="t " style="top:511px;left:1619px;width:87px;text-align:right;color:#2f2f2f;letter-spacing:-0.6px;margin-right:-0.5px;">244.902</div>
<div class="t " style="top:511px;left:1708px;width:68px;text-align:right;color:#2f2f2f;letter-spacing:-0.6px;margin-right:-0.5px;">0.409</div>
<div class="t " style="top:511px;left:1780px;width:102px;text-align:center;color:#2f2f2f;">Show Report</div>
<div class="t " style="top:538px;left:29px;width:95px;text-align:right;color:#2f2f2f;letter-spacing:-0.6px;margin-right:-0.5px;">0</div>
<div class="t " style="top:538px;left:126px;width:95px;text-align:right;color:#2f2f2f;letter-spacing:-0.6px;margin-right:-0.5px;">44</div>
<div class="t " style="top:538px;left:223px;width:96px;text-align:right;color:#2f2f2f;letter-spacing:-0.6px;margin-right:-0.5px;">21.196</div>
<div class="t " style="top:538px;left:321px;width:110px;text-align:right;color:#2f2f2f;letter-spacing:-0.6px;margin-right:-0.5px;">200.000</div>
<div class="t " style="top:538px;left:433px;width:169px;text-align:right;color:#2f2f2f;letter-spacing:-0.6px;margin-right:-0.5px;">0.259</div>
<div class="t " style="top:538px;left:604px;width:169px;text-align:right;color:#2f2f2f;letter-spacing:-0.6px;margin-right:-0.5px;">0.409</div>
<div class="t " style="top:538px;left:775px;width:96px;text-align:right;color:#2f2f2f;letter-spacing:-0.6px;margin-right:-0.5px;">9</div>
<div class="t " style="top:538px;left:873px;width:77px;text-align:right;color:#2f2f2f;letter-spacing:-0.6px;margin-right:-0.5px;">-12.617</div>
<div class="t " style="top:538px;left:952px;width:114px;text-align:right;color:#2f2f2f;letter-spacing:-0.6px;margin-right:-0.5px;">51.847</div>
<div class="t " style="top:538px;left:1068px;width:104px;text-align:right;color:#2f2f2f;letter-spacing:-0.6px;margin-right:-0.5px;">81.824</div>
<div class="r" style="left:1213px;top:539px;width:14px;height:14px;box-sizing:border-box;border:1px solid #a3a3a3;background:#fff;"></div>
<svg style="left:1213px;top:539px" width="14" height="14"><path d="M3.4 7.9 L5.9 10.2 L10.4 4.8" fill="none" stroke="#8a8a8a" stroke-width="1.3"/></svg>
<div class="t " style="top:538px;left:1263px;width:68px;text-align:right;color:#2f2f2f;letter-spacing:-0.6px;margin-right:-0.5px;">365.611</div>
<div class="t " style="top:538px;left:1333px;width:74px;text-align:right;color:#2f2f2f;letter-spacing:-0.6px;margin-right:-0.5px;">0.000</div>
<div class="t " style="top:538px;left:1409px;width:68px;text-align:right;color:#2f2f2f;letter-spacing:-0.6px;margin-right:-0.5px;">433.590</div>
<div class="t " style="top:538px;left:1479px;width:68px;text-align:right;color:#2f2f2f;letter-spacing:-0.6px;margin-right:-0.5px;">272.114</div>
<div class="t " style="top:538px;left:1549px;width:68px;text-align:right;color:#2f2f2f;letter-spacing:-0.6px;margin-right:-0.5px;">0.000</div>
<div class="t " style="top:538px;left:1619px;width:87px;text-align:right;color:#2f2f2f;letter-spacing:-0.6px;margin-right:-0.5px;">244.902</div>
<div class="t " style="top:538px;left:1708px;width:68px;text-align:right;color:#2f2f2f;letter-spacing:-0.6px;margin-right:-0.5px;">0.409</div>
<div class="t " style="top:538px;left:1780px;width:102px;text-align:center;color:#2f2f2f;">Show Report</div>
<div class="t " style="top:565px;left:29px;width:95px;text-align:right;color:#2f2f2f;letter-spacing:-0.6px;margin-right:-0.5px;">0</div>
<div class="t " style="top:565px;left:126px;width:95px;text-align:right;color:#2f2f2f;letter-spacing:-0.6px;margin-right:-0.5px;">77</div>
<div class="t " style="top:565px;left:223px;width:96px;text-align:right;color:#2f2f2f;letter-spacing:-0.6px;margin-right:-0.5px;">0.000</div>
<div class="t " style="top:565px;left:321px;width:110px;text-align:right;color:#2f2f2f;letter-spacing:-0.6px;margin-right:-0.5px;">200.000</div>
<div class="t " style="top:565px;left:433px;width:169px;text-align:right;color:#2f2f2f;letter-spacing:-0.6px;margin-right:-0.5px;">0.259</div>
<div class="t " style="top:565px;left:604px;width:169px;text-align:right;color:#2f2f2f;letter-spacing:-0.6px;margin-right:-0.5px;">0.409</div>
<div class="t " style="top:565px;left:775px;width:96px;text-align:right;color:#2f2f2f;letter-spacing:-0.6px;margin-right:-0.5px;">9</div>
<div class="t " style="top:565px;left:873px;width:77px;text-align:right;color:#2f2f2f;letter-spacing:-0.6px;margin-right:-0.5px;">-16.942</div>
<div class="t " style="top:565px;left:952px;width:114px;text-align:right;color:#2f2f2f;letter-spacing:-0.6px;margin-right:-0.5px;">51.847</div>
<div class="t " style="top:565px;left:1068px;width:104px;text-align:right;color:#2f2f2f;letter-spacing:-0.6px;margin-right:-0.5px;">81.824</div>
<div class="r" style="left:1213px;top:566px;width:14px;height:14px;box-sizing:border-box;border:1px solid #a3a3a3;background:#fff;"></div>
<svg style="left:1213px;top:566px" width="14" height="14"><path d="M3.4 7.9 L5.9 10.2 L10.4 4.8" fill="none" stroke="#8a8a8a" stroke-width="1.3"/></svg>
<div class="t " style="top:565px;left:1263px;width:68px;text-align:right;color:#2f2f2f;letter-spacing:-0.6px;margin-right:-0.5px;">365.611</div>
<div class="t " style="top:565px;left:1333px;width:74px;text-align:right;color:#2f2f2f;letter-spacing:-0.6px;margin-right:-0.5px;">0.000</div>
<div class="t " style="top:565px;left:1409px;width:68px;text-align:right;color:#2f2f2f;letter-spacing:-0.6px;margin-right:-0.5px;">433.590</div>
<div class="t " style="top:565px;left:1479px;width:68px;text-align:right;color:#2f2f2f;letter-spacing:-0.6px;margin-right:-0.5px;">272.114</div>
<div class="t " style="top:565px;left:1549px;width:68px;text-align:right;color:#2f2f2f;letter-spacing:-0.6px;margin-right:-0.5px;">0.000</div>
<div class="t " style="top:565px;left:1619px;width:87px;text-align:right;color:#2f2f2f;letter-spacing:-0.6px;margin-right:-0.5px;">244.902</div>
<div class="t " style="top:565px;left:1708px;width:68px;text-align:right;color:#2f2f2f;letter-spacing:-0.6px;margin-right:-0.5px;">0.409</div>
<div class="t " style="top:565px;left:1780px;width:102px;text-align:center;color:#2f2f2f;">Show Report</div>
<div class="t " style="top:592px;left:29px;width:95px;text-align:right;color:#2f2f2f;letter-spacing:-0.6px;margin-right:-0.5px;">0</div>
<div class="t " style="top:592px;left:126px;width:95px;text-align:right;color:#2f2f2f;letter-spacing:-0.6px;margin-right:-0.5px;">77</div>
<div class="t " style="top:592px;left:223px;width:96px;text-align:right;color:#2f2f2f;letter-spacing:-0.6px;margin-right:-0.5px;">10.598</div>
<div class="t " style="top:592px;left:321px;width:110px;text-align:right;color:#2f2f2f;letter-spacing:-0.6px;margin-right:-0.5px;">200.000</div>
<div class="t " style="top:592px;left:433px;width:169px;text-align:right;color:#2f2f2f;letter-spacing:-0.6px;margin-right:-0.5px;">0.259</div>
<div class="t " style="top:592px;left:604px;width:169px;text-align:right;color:#2f2f2f;letter-spacing:-0.6px;margin-right:-0.5px;">0.409</div>
<div class="t " style="top:592px;left:775px;width:96px;text-align:right;color:#2f2f2f;letter-spacing:-0.6px;margin-right:-0.5px;">9</div>
<div class="t " style="top:592px;left:873px;width:77px;text-align:right;color:#2f2f2f;letter-spacing:-0.6px;margin-right:-0.5px;">-16.906</div>
<div class="t " style="top:592px;left:952px;width:114px;text-align:right;color:#2f2f2f;letter-spacing:-0.6px;margin-right:-0.5px;">51.847</div>
<div class="t " style="top:592px;left:1068px;width:104px;text-align:right;color:#2f2f2f;letter-spacing:-0.6px;margin-right:-0.5px;">81.824</div>
<div class="r" style="left:1213px;top:593px;width:14px;height:14px;box-sizing:border-box;border:1px solid #a3a3a3;background:#fff;"></div>
<svg style="left:1213px;top:593px" width="14" height="14"><path d="M3.4 7.9 L5.9 10.2 L10.4 4.8" fill="none" stroke="#8a8a8a" stroke-width="1.3"/></svg>
<div class="t " style="top:592px;left:1263px;width:68px;text-align:right;color:#2f2f2f;letter-spacing:-0.6px;margin-right:-0.5px;">365.611</div>
<div class="t " style="top:592px;left:1333px;width:74px;text-align:right;color:#2f2f2f;letter-spacing:-0.6px;margin-right:-0.5px;">0.000</div>
<div class="t " style="top:592px;left:1409px;width:68px;text-align:right;color:#2f2f2f;letter-spacing:-0.6px;margin-right:-0.5px;">433.590</div>
<div class="t " style="top:592px;left:1479px;width:68px;text-align:right;color:#2f2f2f;letter-spacing:-0.6px;margin-right:-0.5px;">272.114</div>
<div class="t " style="top:592px;left:1549px;width:68px;text-align:right;color:#2f2f2f;letter-spacing:-0.6px;margin-right:-0.5px;">0.000</div>
<div class="t " style="top:592px;left:1619px;width:87px;text-align:right;color:#2f2f2f;letter-spacing:-0.6px;margin-right:-0.5px;">244.902</div>
<div class="t " style="top:592px;left:1708px;width:68px;text-align:right;color:#2f2f2f;letter-spacing:-0.6px;margin-right:-0.5px;">0.409</div>
<div class="t " style="top:592px;left:1780px;width:102px;text-align:center;color:#2f2f2f;">Show Report</div>
<div class="t " style="top:619px;left:29px;width:95px;text-align:right;color:#2f2f2f;letter-spacing:-0.6px;margin-right:-0.5px;">0</div>
<div class="t " style="top:619px;left:126px;width:95px;text-align:right;color:#2f2f2f;letter-spacing:-0.6px;margin-right:-0.5px;">77</div>
<div class="t " style="top:619px;left:223px;width:96px;text-align:right;color:#2f2f2f;letter-spacing:-0.6px;margin-right:-0.5px;">21.196</div>
<div class="t " style="top:619px;left:321px;width:110px;text-align:right;color:#2f2f2f;letter-spacing:-0.6px;margin-right:-0.5px;">200.000</div>
<div class="t " style="top:619px;left:433px;width:169px;text-align:right;color:#2f2f2f;letter-spacing:-0.6px;margin-right:-0.5px;">0.259</div>
<div class="t " style="top:619px;left:604px;width:169px;text-align:right;color:#2f2f2f;letter-spacing:-0.6px;margin-right:-0.5px;">0.409</div>
<div class="t " style="top:619px;left:775px;width:96px;text-align:right;color:#2f2f2f;letter-spacing:-0.6px;margin-right:-0.5px;">9</div>
<div class="t " style="top:619px;left:873px;width:77px;text-align:right;color:#2f2f2f;letter-spacing:-0.6px;margin-right:-0.5px;">-16.869</div>
<div class="t " style="top:619px;left:952px;width:114px;text-align:right;color:#2f2f2f;letter-spacing:-0.6px;margin-right:-0.5px;">51.847</div>
<div class="t " style="top:619px;left:1068px;width:104px;text-align:right;color:#2f2f2f;letter-spacing:-0.6px;margin-right:-0.5px;">81.824</div>
<div class="r" style="left:1213px;top:620px;width:14px;height:14px;box-sizing:border-box;border:1px solid #a3a3a3;background:#fff;"></div>
<svg style="left:1213px;top:620px" width="14" height="14"><path d="M3.4 7.9 L5.9 10.2 L10.4 4.8" fill="none" stroke="#8a8a8a" stroke-width="1.3"/></svg>
<div class="t " style="top:619px;left:1263px;width:68px;text-align:right;color:#2f2f2f;letter-spacing:-0.6px;margin-right:-0.5px;">365.611</div>
<div class="t " style="top:619px;left:1333px;width:74px;text-align:right;color:#2f2f2f;letter-spacing:-0.6px;margin-right:-0.5px;">0.000</div>
<div class="t " style="top:619px;left:1409px;width:68px;text-align:right;color:#2f2f2f;letter-spacing:-0.6px;margin-right:-0.5px;">433.590</div>
<div class="t " style="top:619px;left:1479px;width:68px;text-align:right;color:#2f2f2f;letter-spacing:-0.6px;margin-right:-0.5px;">272.114</div>
<div class="t " style="top:619px;left:1549px;width:68px;text-align:right;color:#2f2f2f;letter-spacing:-0.6px;margin-right:-0.5px;">0.000</div>
<div class="t " style="top:619px;left:1619px;width:87px;text-align:right;color:#2f2f2f;letter-spacing:-0.6px;margin-right:-0.5px;">244.902</div>
<div class="t " style="top:619px;left:1708px;width:68px;text-align:right;color:#2f2f2f;letter-spacing:-0.6px;margin-right:-0.5px;">0.409</div>
<div class="t " style="top:619px;left:1780px;width:102px;text-align:center;color:#2f2f2f;">Show Report</div>
<div class="t " style="top:646px;left:29px;width:95px;text-align:right;color:#2f2f2f;letter-spacing:-0.6px;margin-right:-0.5px;">0</div>
<div class="t " style="top:646px;left:126px;width:95px;text-align:right;color:#2f2f2f;letter-spacing:-0.6px;margin-right:-0.5px;">78</div>
<div class="t " style="top:646px;left:223px;width:96px;text-align:right;color:#2f2f2f;letter-spacing:-0.6px;margin-right:-0.5px;">0.000</div>
<div class="t " style="top:646px;left:321px;width:110px;text-align:right;color:#2f2f2f;letter-spacing:-0.6px;margin-right:-0.5px;">200.000</div>
<div class="t " style="top:646px;left:433px;width:169px;text-align:right;color:#2f2f2f;letter-spacing:-0.6px;margin-right:-0.5px;">0.259</div>
<div class="t " style="top:646px;left:604px;width:169px;text-align:right;color:#2f2f2f;letter-spacing:-0.6px;margin-right:-0.5px;">0.409</div>
<div class="t " style="top:646px;left:775px;width:96px;text-align:right;color:#2f2f2f;letter-spacing:-0.6px;margin-right:-0.5px;">9</div>
<div class="t " style="top:646px;left:873px;width:77px;text-align:right;color:#2f2f2f;letter-spacing:-0.6px;margin-right:-0.5px;">-20.910</div>
<div class="t " style="top:646px;left:952px;width:114px;text-align:right;color:#2f2f2f;letter-spacing:-0.6px;margin-right:-0.5px;">51.847</div>
<div class="t " style="top:646px;left:1068px;width:104px;text-align:right;color:#2f2f2f;letter-spacing:-0.6px;margin-right:-0.5px;">81.824</div>
<div class="r" style="left:1213px;top:647px;width:14px;height:14px;box-sizing:border-box;border:1px solid #a3a3a3;background:#fff;"></div>
<svg style="left:1213px;top:647px" width="14" height="14"><path d="M3.4 7.9 L5.9 10.2 L10.4 4.8" fill="none" stroke="#8a8a8a" stroke-width="1.3"/></svg>
<div class="t " style="top:646px;left:1263px;width:68px;text-align:right;color:#2f2f2f;letter-spacing:-0.6px;margin-right:-0.5px;">365.611</div>
<div class="t " style="top:646px;left:1333px;width:74px;text-align:right;color:#2f2f2f;letter-spacing:-0.6px;margin-right:-0.5px;">0.000</div>
<div class="t " style="top:646px;left:1409px;width:68px;text-align:right;color:#2f2f2f;letter-spacing:-0.6px;margin-right:-0.5px;">433.590</div>
<div class="t " style="top:646px;left:1479px;width:68px;text-align:right;color:#2f2f2f;letter-spacing:-0.6px;margin-right:-0.5px;">272.114</div>
<div class="t " style="top:646px;left:1549px;width:68px;text-align:right;color:#2f2f2f;letter-spacing:-0.6px;margin-right:-0.5px;">0.000</div>
<div class="t " style="top:646px;left:1619px;width:87px;text-align:right;color:#2f2f2f;letter-spacing:-0.6px;margin-right:-0.5px;">244.902</div>
<div class="t " style="top:646px;left:1708px;width:68px;text-align:right;color:#2f2f2f;letter-spacing:-0.6px;margin-right:-0.5px;">0.409</div>
<div class="t " style="top:646px;left:1780px;width:102px;text-align:center;color:#2f2f2f;">Show Report</div>
<div class="t " style="top:673px;left:29px;width:95px;text-align:right;color:#2f2f2f;letter-spacing:-0.6px;margin-right:-0.5px;">0</div>
<div class="t " style="top:673px;left:126px;width:95px;text-align:right;color:#2f2f2f;letter-spacing:-0.6px;margin-right:-0.5px;">78</div>
<div class="t " style="top:673px;left:223px;width:96px;text-align:right;color:#2f2f2f;letter-spacing:-0.6px;margin-right:-0.5px;">10.598</div>
<div class="t " style="top:673px;left:321px;width:110px;text-align:right;color:#2f2f2f;letter-spacing:-0.6px;margin-right:-0.5px;">200.000</div>
<div class="t " style="top:673px;left:433px;width:169px;text-align:right;color:#2f2f2f;letter-spacing:-0.6px;margin-right:-0.5px;">0.259</div>
<div class="t " style="top:673px;left:604px;width:169px;text-align:right;color:#2f2f2f;letter-spacing:-0.6px;margin-right:-0.5px;">0.409</div>
<div class="t " style="top:673px;left:775px;width:96px;text-align:right;color:#2f2f2f;letter-spacing:-0.6px;margin-right:-0.5px;">9</div>
<div class="t " style="top:673px;left:873px;width:77px;text-align:right;color:#2f2f2f;letter-spacing:-0.6px;margin-right:-0.5px;">-20.873</div>
<div class="t " style="top:673px;left:952px;width:114px;text-align:right;color:#2f2f2f;letter-spacing:-0.6px;margin-right:-0.5px;">51.847</div>
<div class="t " style="top:673px;left:1068px;width:104px;text-align:right;color:#2f2f2f;letter-spacing:-0.6px;margin-right:-0.5px;">81.824</div>
<div class="r" style="left:1213px;top:674px;width:14px;height:14px;box-sizing:border-box;border:1px solid #a3a3a3;background:#fff;"></div>
<svg style="left:1213px;top:674px" width="14" height="14"><path d="M3.4 7.9 L5.9 10.2 L10.4 4.8" fill="none" stroke="#8a8a8a" stroke-width="1.3"/></svg>
<div class="t " style="top:673px;left:1263px;width:68px;text-align:right;color:#2f2f2f;letter-spacing:-0.6px;margin-right:-0.5px;">365.611</div>
<div class="t " style="top:673px;left:1333px;width:74px;text-align:right;color:#2f2f2f;letter-spacing:-0.6px;margin-right:-0.5px;">0.000</div>
<div class="t " style="top:673px;left:1409px;width:68px;text-align:right;color:#2f2f2f;letter-spacing:-0.6px;margin-right:-0.5px;">433.590</div>
<div class="t " style="top:673px;left:1479px;width:68px;text-align:right;color:#2f2f2f;letter-spacing:-0.6px;margin-right:-0.5px;">272.114</div>
<div class="t " style="top:673px;left:1549px;width:68px;text-align:right;color:#2f2f2f;letter-spacing:-0.6px;margin-right:-0.5px;">0.000</div>
<div class="t " style="top:673px;left:1619px;width:87px;text-align:right;color:#2f2f2f;letter-spacing:-0.6px;margin-right:-0.5px;">244.902</div>
<div class="t " style="top:673px;left:1708px;width:68px;text-align:right;color:#2f2f2f;letter-spacing:-0.6px;margin-right:-0.5px;">0.409</div>
<div class="t " style="top:673px;left:1780px;width:102px;text-align:center;color:#2f2f2f;">Show Report</div>
<div class="t " style="top:700px;left:29px;width:95px;text-align:right;color:#2f2f2f;letter-spacing:-0.6px;margin-right:-0.5px;">0</div>
<div class="t " style="top:700px;left:126px;width:95px;text-align:right;color:#2f2f2f;letter-spacing:-0.6px;margin-right:-0.5px;">78</div>
<div class="t " style="top:700px;left:223px;width:96px;text-align:right;color:#2f2f2f;letter-spacing:-0.6px;margin-right:-0.5px;">21.196</div>
<div class="t " style="top:700px;left:321px;width:110px;text-align:right;color:#2f2f2f;letter-spacing:-0.6px;margin-right:-0.5px;">200.000</div>
<div class="t " style="top:700px;left:433px;width:169px;text-align:right;color:#2f2f2f;letter-spacing:-0.6px;margin-right:-0.5px;">0.259</div>
<div class="t " style="top:700px;left:604px;width:169px;text-align:right;color:#2f2f2f;letter-spacing:-0.6px;margin-right:-0.5px;">0.409</div>
<div class="t " style="top:700px;left:775px;width:96px;text-align:right;color:#2f2f2f;letter-spacing:-0.6px;margin-right:-0.5px;">9</div>
<div class="t " style="top:700px;left:873px;width:77px;text-align:right;color:#2f2f2f;letter-spacing:-0.6px;margin-right:-0.5px;">-20.836</div>
<div class="t " style="top:700px;left:952px;width:114px;text-align:right;color:#2f2f2f;letter-spacing:-0.6px;margin-right:-0.5px;">51.847</div>
<div class="t " style="top:700px;left:1068px;width:104px;text-align:right;color:#2f2f2f;letter-spacing:-0.6px;margin-right:-0.5px;">81.824</div>
<div class="r" style="left:1213px;top:701px;width:14px;height:14px;box-sizing:border-box;border:1px solid #a3a3a3;background:#fff;"></div>
<svg style="left:1213px;top:701px" width="14" height="14"><path d="M3.4 7.9 L5.9 10.2 L10.4 4.8" fill="none" stroke="#8a8a8a" stroke-width="1.3"/></svg>
<div class="t " style="top:700px;left:1263px;width:68px;text-align:right;color:#2f2f2f;letter-spacing:-0.6px;margin-right:-0.5px;">365.611</div>
<div class="t " style="top:700px;left:1333px;width:74px;text-align:right;color:#2f2f2f;letter-spacing:-0.6px;margin-right:-0.5px;">0.000</div>
<div class="t " style="top:700px;left:1409px;width:68px;text-align:right;color:#2f2f2f;letter-spacing:-0.6px;margin-right:-0.5px;">433.590</div>
<div class="t " style="top:700px;left:1479px;width:68px;text-align:right;color:#2f2f2f;letter-spacing:-0.6px;margin-right:-0.5px;">272.114</div>
<div class="t " style="top:700px;left:1549px;width:68px;text-align:right;color:#2f2f2f;letter-spacing:-0.6px;margin-right:-0.5px;">0.000</div>
<div class="t " style="top:700px;left:1619px;width:87px;text-align:right;color:#2f2f2f;letter-spacing:-0.6px;margin-right:-0.5px;">244.902</div>
<div class="t " style="top:700px;left:1708px;width:68px;text-align:right;color:#2f2f2f;letter-spacing:-0.6px;margin-right:-0.5px;">0.409</div>
<div class="t " style="top:700px;left:1780px;width:102px;text-align:center;color:#2f2f2f;">Show Report</div>
<div class="t " style="top:727px;left:29px;width:95px;text-align:right;color:#2f2f2f;letter-spacing:-0.6px;margin-right:-0.5px;">0</div>
<div class="t " style="top:727px;left:126px;width:95px;text-align:right;color:#2f2f2f;letter-spacing:-0.6px;margin-right:-0.5px;">81</div>
<div class="t " style="top:727px;left:223px;width:96px;text-align:right;color:#2f2f2f;letter-spacing:-0.6px;margin-right:-0.5px;">0.000</div>
<div class="t " style="top:727px;left:321px;width:110px;text-align:right;color:#2f2f2f;letter-spacing:-0.6px;margin-right:-0.5px;">200.000</div>
<div class="t " style="top:727px;left:433px;width:169px;text-align:right;color:#2f2f2f;letter-spacing:-0.6px;margin-right:-0.5px;">0.259</div>
<div class="t " style="top:727px;left:604px;width:169px;text-align:right;color:#2f2f2f;letter-spacing:-0.6px;margin-right:-0.5px;">0.409</div>
<div class="t " style="top:727px;left:775px;width:96px;text-align:right;color:#2f2f2f;letter-spacing:-0.6px;margin-right:-0.5px;">9</div>
<div class="t " style="top:727px;left:873px;width:77px;text-align:right;color:#2f2f2f;letter-spacing:-0.6px;margin-right:-0.5px;">-13.782</div>
<div class="t " style="top:727px;left:952px;width:114px;text-align:right;color:#2f2f2f;letter-spacing:-0.6px;margin-right:-0.5px;">51.847</div>
<div class="t " style="top:727px;left:1068px;width:104px;text-align:right;color:#2f2f2f;letter-spacing:-0.6px;margin-right:-0.5px;">81.824</div>
<div class="r" style="left:1213px;top:728px;width:14px;height:14px;box-sizing:border-box;border:1px solid #a3a3a3;background:#fff;"></div>
<svg style="left:1213px;top:728px" width="14" height="14"><path d="M3.4 7.9 L5.9 10.2 L10.4 4.8" fill="none" stroke="#8a8a8a" stroke-width="1.3"/></svg>
<div class="t " style="top:727px;left:1263px;width:68px;text-align:right;color:#2f2f2f;letter-spacing:-0.6px;margin-right:-0.5px;">365.611</div>
<div class="t " style="top:727px;left:1333px;width:74px;text-align:right;color:#2f2f2f;letter-spacing:-0.6px;margin-right:-0.5px;">0.000</div>
<div class="t " style="top:727px;left:1409px;width:68px;text-align:right;color:#2f2f2f;letter-spacing:-0.6px;margin-right:-0.5px;">433.590</div>
<div class="t " style="top:727px;left:1479px;width:68px;text-align:right;color:#2f2f2f;letter-spacing:-0.6px;margin-right:-0.5px;">272.114</div>
<div class="t " style="top:727px;left:1549px;width:68px;text-align:right;color:#2f2f2f;letter-spacing:-0.6px;margin-right:-0.5px;">0.000</div>
<div class="t " style="top:727px;left:1619px;width:87px;text-align:right;color:#2f2f2f;letter-spacing:-0.6px;margin-right:-0.5px;">244.902</div>
<div class="t " style="top:727px;left:1708px;width:68px;text-align:right;color:#2f2f2f;letter-spacing:-0.6px;margin-right:-0.5px;">0.409</div>
<div class="t " style="top:727px;left:1780px;width:102px;text-align:center;color:#2f2f2f;">Show Report</div>
<div class="t " style="top:754px;left:29px;width:95px;text-align:right;color:#2f2f2f;letter-spacing:-0.6px;margin-right:-0.5px;">0</div>
<div class="t " style="top:754px;left:126px;width:95px;text-align:right;color:#2f2f2f;letter-spacing:-0.6px;margin-right:-0.5px;">81</div>
<div class="t " style="top:754px;left:223px;width:96px;text-align:right;color:#2f2f2f;letter-spacing:-0.6px;margin-right:-0.5px;">10.598</div>
<div class="t " style="top:754px;left:321px;width:110px;text-align:right;color:#2f2f2f;letter-spacing:-0.6px;margin-right:-0.5px;">200.000</div>
<div class="t " style="top:754px;left:433px;width:169px;text-align:right;color:#2f2f2f;letter-spacing:-0.6px;margin-right:-0.5px;">0.259</div>
<div class="t " style="top:754px;left:604px;width:169px;text-align:right;color:#2f2f2f;letter-spacing:-0.6px;margin-right:-0.5px;">0.409</div>
<div class="t " style="top:754px;left:775px;width:96px;text-align:right;color:#2f2f2f;letter-spacing:-0.6px;margin-right:-0.5px;">9</div>
<div class="t " style="top:754px;left:873px;width:77px;text-align:right;color:#2f2f2f;letter-spacing:-0.6px;margin-right:-0.5px;">-13.763</div>
<div class="t " style="top:754px;left:952px;width:114px;text-align:right;color:#2f2f2f;letter-spacing:-0.6px;margin-right:-0.5px;">51.847</div>
<div class="t " style="top:754px;left:1068px;width:104px;text-align:right;color:#2f2f2f;letter-spacing:-0.6px;margin-right:-0.5px;">81.824</div>
<div class="r" style="left:1213px;top:755px;width:14px;height:14px;box-sizing:border-box;border:1px solid #a3a3a3;background:#fff;"></div>
<svg style="left:1213px;top:755px" width="14" height="14"><path d="M3.4 7.9 L5.9 10.2 L10.4 4.8" fill="none" stroke="#8a8a8a" stroke-width="1.3"/></svg>
<div class="t " style="top:754px;left:1263px;width:68px;text-align:right;color:#2f2f2f;letter-spacing:-0.6px;margin-right:-0.5px;">365.611</div>
<div class="t " style="top:754px;left:1333px;width:74px;text-align:right;color:#2f2f2f;letter-spacing:-0.6px;margin-right:-0.5px;">0.000</div>
<div class="t " style="top:754px;left:1409px;width:68px;text-align:right;color:#2f2f2f;letter-spacing:-0.6px;margin-right:-0.5px;">433.590</div>
<div class="t " style="top:754px;left:1479px;width:68px;text-align:right;color:#2f2f2f;letter-spacing:-0.6px;margin-right:-0.5px;">272.114</div>
<div class="t " style="top:754px;left:1549px;width:68px;text-align:right;color:#2f2f2f;letter-spacing:-0.6px;margin-right:-0.5px;">0.000</div>
<div class="t " style="top:754px;left:1619px;width:87px;text-align:right;color:#2f2f2f;letter-spacing:-0.6px;margin-right:-0.5px;">244.902</div>
<div class="t " style="top:754px;left:1708px;width:68px;text-align:right;color:#2f2f2f;letter-spacing:-0.6px;margin-right:-0.5px;">0.409</div>
<div class="t " style="top:754px;left:1780px;width:102px;text-align:center;color:#2f2f2f;">Show Report</div>
<div class="t " style="top:781px;left:29px;width:95px;text-align:right;color:#2f2f2f;letter-spacing:-0.6px;margin-right:-0.5px;">0</div>
<div class="t " style="top:781px;left:126px;width:95px;text-align:right;color:#2f2f2f;letter-spacing:-0.6px;margin-right:-0.5px;">81</div>
<div class="t " style="top:781px;left:223px;width:96px;text-align:right;color:#2f2f2f;letter-spacing:-0.6px;margin-right:-0.5px;">21.196</div>
<div class="t " style="top:781px;left:321px;width:110px;text-align:right;color:#2f2f2f;letter-spacing:-0.6px;margin-right:-0.5px;">200.000</div>
<div class="t " style="top:781px;left:433px;width:169px;text-align:right;color:#2f2f2f;letter-spacing:-0.6px;margin-right:-0.5px;">0.259</div>
<div class="t " style="top:781px;left:604px;width:169px;text-align:right;color:#2f2f2f;letter-spacing:-0.6px;margin-right:-0.5px;">0.409</div>
<div class="t " style="top:781px;left:775px;width:96px;text-align:right;color:#2f2f2f;letter-spacing:-0.6px;margin-right:-0.5px;">9</div>
<div class="t " style="top:781px;left:873px;width:77px;text-align:right;color:#2f2f2f;letter-spacing:-0.6px;margin-right:-0.5px;">-13.745</div>
<div class="t " style="top:781px;left:952px;width:114px;text-align:right;color:#2f2f2f;letter-spacing:-0.6px;margin-right:-0.5px;">51.847</div>
<div class="t " style="top:781px;left:1068px;width:104px;text-align:right;color:#2f2f2f;letter-spacing:-0.6px;margin-right:-0.5px;">81.824</div>
<div class="r" style="left:1213px;top:782px;width:14px;height:14px;box-sizing:border-box;border:1px solid #a3a3a3;background:#fff;"></div>
<svg style="left:1213px;top:782px" width="14" height="14"><path d="M3.4 7.9 L5.9 10.2 L10.4 4.8" fill="none" stroke="#8a8a8a" stroke-width="1.3"/></svg>
<div class="t " style="top:781px;left:1263px;width:68px;text-align:right;color:#2f2f2f;letter-spacing:-0.6px;margin-right:-0.5px;">365.611</div>
<div class="t " style="top:781px;left:1333px;width:74px;text-align:right;color:#2f2f2f;letter-spacing:-0.6px;margin-right:-0.5px;">0.000</div>
<div class="t " style="top:781px;left:1409px;width:68px;text-align:right;color:#2f2f2f;letter-spacing:-0.6px;margin-right:-0.5px;">433.590</div>
<div class="t " style="top:781px;left:1479px;width:68px;text-align:right;color:#2f2f2f;letter-spacing:-0.6px;margin-right:-0.5px;">272.114</div>
<div class="t " style="top:781px;left:1549px;width:68px;text-align:right;color:#2f2f2f;letter-spacing:-0.6px;margin-right:-0.5px;">0.000</div>
<div class="t " style="top:781px;left:1619px;width:87px;text-align:right;color:#2f2f2f;letter-spacing:-0.6px;margin-right:-0.5px;">244.902</div>
<div class="t " style="top:781px;left:1708px;width:68px;text-align:right;color:#2f2f2f;letter-spacing:-0.6px;margin-right:-0.5px;">0.409</div>
<div class="t " style="top:781px;left:1780px;width:102px;text-align:center;color:#2f2f2f;">Show Report</div>
<div class="t " style="top:808px;left:29px;width:95px;text-align:right;color:#2f2f2f;letter-spacing:-0.6px;margin-right:-0.5px;">0</div>
<div class="t " style="top:808px;left:126px;width:95px;text-align:right;color:#2f2f2f;letter-spacing:-0.6px;margin-right:-0.5px;">82</div>
<div class="t " style="top:808px;left:223px;width:96px;text-align:right;color:#2f2f2f;letter-spacing:-0.6px;margin-right:-0.5px;">0.000</div>
<div class="t " style="top:808px;left:321px;width:110px;text-align:right;color:#2f2f2f;letter-spacing:-0.6px;margin-right:-0.5px;">200.000</div>
<div class="t " style="top:808px;left:433px;width:169px;text-align:right;color:#2f2f2f;letter-spacing:-0.6px;margin-right:-0.5px;">0.259</div>
<div class="t " style="top:808px;left:604px;width:169px;text-align:right;color:#2f2f2f;letter-spacing:-0.6px;margin-right:-0.5px;">0.409</div>
<div class="t " style="top:808px;left:775px;width:96px;text-align:right;color:#2f2f2f;letter-spacing:-0.6px;margin-right:-0.5px;">9</div>
<div class="t " style="top:808px;left:873px;width:77px;text-align:right;color:#2f2f2f;letter-spacing:-0.6px;margin-right:-0.5px;">-17.749</div>
<div class="t " style="top:808px;left:952px;width:114px;text-align:right;color:#2f2f2f;letter-spacing:-0.6px;margin-right:-0.5px;">51.847</div>
<div class="t " style="top:808px;left:1068px;width:104px;text-align:right;color:#2f2f2f;letter-spacing:-0.6px;margin-right:-0.5px;">81.824</div>
<div class="r" style="left:1213px;top:809px;width:14px;height:14px;box-sizing:border-box;border:1px solid #a3a3a3;background:#fff;"></div>
<svg style="left:1213px;top:809px" width="14" height="14"><path d="M3.4 7.9 L5.9 10.2 L10.4 4.8" fill="none" stroke="#8a8a8a" stroke-width="1.3"/></svg>
<div class="t " style="top:808px;left:1263px;width:68px;text-align:right;color:#2f2f2f;letter-spacing:-0.6px;margin-right:-0.5px;">365.611</div>
<div class="t " style="top:808px;left:1333px;width:74px;text-align:right;color:#2f2f2f;letter-spacing:-0.6px;margin-right:-0.5px;">0.000</div>
<div class="t " style="top:808px;left:1409px;width:68px;text-align:right;color:#2f2f2f;letter-spacing:-0.6px;margin-right:-0.5px;">433.590</div>
<div class="t " style="top:808px;left:1479px;width:68px;text-align:right;color:#2f2f2f;letter-spacing:-0.6px;margin-right:-0.5px;">272.114</div>
<div class="t " style="top:808px;left:1549px;width:68px;text-align:right;color:#2f2f2f;letter-spacing:-0.6px;margin-right:-0.5px;">0.000</div>
<div class="t " style="top:808px;left:1619px;width:87px;text-align:right;color:#2f2f2f;letter-spacing:-0.6px;margin-right:-0.5px;">244.902</div>
<div class="t " style="top:808px;left:1708px;width:68px;text-align:right;color:#2f2f2f;letter-spacing:-0.6px;margin-right:-0.5px;">0.409</div>
<div class="t " style="top:808px;left:1780px;width:102px;text-align:center;color:#2f2f2f;">Show Report</div>
<div class="t " style="top:835px;left:29px;width:95px;text-align:right;color:#2f2f2f;letter-spacing:-0.6px;margin-right:-0.5px;">0</div>
<div class="t " style="top:835px;left:126px;width:95px;text-align:right;color:#2f2f2f;letter-spacing:-0.6px;margin-right:-0.5px;">82</div>
<div class="t " style="top:835px;left:223px;width:96px;text-align:right;color:#2f2f2f;letter-spacing:-0.6px;margin-right:-0.5px;">10.598</div>
<div class="t " style="top:835px;left:321px;width:110px;text-align:right;color:#2f2f2f;letter-spacing:-0.6px;margin-right:-0.5px;">200.000</div>
<div class="t " style="top:835px;left:433px;width:169px;text-align:right;color:#2f2f2f;letter-spacing:-0.6px;margin-right:-0.5px;">0.259</div>
<div class="t " style="top:835px;left:604px;width:169px;text-align:right;color:#2f2f2f;letter-spacing:-0.6px;margin-right:-0.5px;">0.409</div>
<div class="t " style="top:835px;left:775px;width:96px;text-align:right;color:#2f2f2f;letter-spacing:-0.6px;margin-right:-0.5px;">9</div>
<div class="t " style="top:835px;left:873px;width:77px;text-align:right;color:#2f2f2f;letter-spacing:-0.6px;margin-right:-0.5px;">-17.731</div>
<div class="t " style="top:835px;left:952px;width:114px;text-align:right;color:#2f2f2f;letter-spacing:-0.6px;margin-right:-0.5px;">51.847</div>
<div class="t " style="top:835px;left:1068px;width:104px;text-align:right;color:#2f2f2f;letter-spacing:-0.6px;margin-right:-0.5px;">81.824</div>
<div class="r" style="left:1213px;top:836px;width:14px;height:14px;box-sizing:border-box;border:1px solid #a3a3a3;background:#fff;"></div>
<svg style="left:1213px;top:836px" width="14" height="14"><path d="M3.4 7.9 L5.9 10.2 L10.4 4.8" fill="none" stroke="#8a8a8a" stroke-width="1.3"/></svg>
<div class="t " style="top:835px;left:1263px;width:68px;text-align:right;color:#2f2f2f;letter-spacing:-0.6px;margin-right:-0.5px;">365.611</div>
<div class="t " style="top:835px;left:1333px;width:74px;text-align:right;color:#2f2f2f;letter-spacing:-0.6px;margin-right:-0.5px;">0.000</div>
<div class="t " style="top:835px;left:1409px;width:68px;text-align:right;color:#2f2f2f;letter-spacing:-0.6px;margin-right:-0.5px;">433.590</div>
<div class="t " style="top:835px;left:1479px;width:68px;text-align:right;color:#2f2f2f;letter-spacing:-0.6px;margin-right:-0.5px;">272.114</div>
<div class="t " style="top:835px;left:1549px;width:68px;text-align:right;color:#2f2f2f;letter-spacing:-0.6px;margin-right:-0.5px;">0.000</div>
<div class="t " style="top:835px;left:1619px;width:87px;text-align:right;color:#2f2f2f;letter-spacing:-0.6px;margin-right:-0.5px;">244.902</div>
<div class="t " style="top:835px;left:1708px;width:68px;text-align:right;color:#2f2f2f;letter-spacing:-0.6px;margin-right:-0.5px;">0.409</div>
<div class="t " style="top:835px;left:1780px;width:102px;text-align:center;color:#2f2f2f;">Show Report</div>
<div class="t " style="top:862px;left:29px;width:95px;text-align:right;color:#2f2f2f;letter-spacing:-0.6px;margin-right:-0.5px;">0</div>
<div class="t " style="top:862px;left:126px;width:95px;text-align:right;color:#2f2f2f;letter-spacing:-0.6px;margin-right:-0.5px;">82</div>
<div class="t " style="top:862px;left:223px;width:96px;text-align:right;color:#2f2f2f;letter-spacing:-0.6px;margin-right:-0.5px;">21.196</div>
<div class="t " style="top:862px;left:321px;width:110px;text-align:right;color:#2f2f2f;letter-spacing:-0.6px;margin-right:-0.5px;">200.000</div>
<div class="t " style="top:862px;left:433px;width:169px;text-align:right;color:#2f2f2f;letter-spacing:-0.6px;margin-right:-0.5px;">0.259</div>
<div class="t " style="top:862px;left:604px;width:169px;text-align:right;color:#2f2f2f;letter-spacing:-0.6px;margin-right:-0.5px;">0.409</div>
<div class="t " style="top:862px;left:775px;width:96px;text-align:right;color:#2f2f2f;letter-spacing:-0.6px;margin-right:-0.5px;">9</div>
<div class="t " style="top:862px;left:873px;width:77px;text-align:right;color:#2f2f2f;letter-spacing:-0.6px;margin-right:-0.5px;">-17.712</div>
<div class="t " style="top:862px;left:952px;width:114px;text-align:right;color:#2f2f2f;letter-spacing:-0.6px;margin-right:-0.5px;">51.847</div>
<div class="t " style="top:862px;left:1068px;width:104px;text-align:right;color:#2f2f2f;letter-spacing:-0.6px;margin-right:-0.5px;">81.824</div>
<div class="r" style="left:1213px;top:863px;width:14px;height:14px;box-sizing:border-box;border:1px solid #a3a3a3;background:#fff;"></div>
<svg style="left:1213px;top:863px" width="14" height="14"><path d="M3.4 7.9 L5.9 10.2 L10.4 4.8" fill="none" stroke="#8a8a8a" stroke-width="1.3"/></svg>
<div class="t " style="top:862px;left:1263px;width:68px;text-align:right;color:#2f2f2f;letter-spacing:-0.6px;margin-right:-0.5px;">365.611</div>
<div class="t " style="top:862px;left:1333px;width:74px;text-align:right;color:#2f2f2f;letter-spacing:-0.6px;margin-right:-0.5px;">0.000</div>
<div class="t " style="top:862px;left:1409px;width:68px;text-align:right;color:#2f2f2f;letter-spacing:-0.6px;margin-right:-0.5px;">433.590</div>
<div class="t " style="top:862px;left:1479px;width:68px;text-align:right;color:#2f2f2f;letter-spacing:-0.6px;margin-right:-0.5px;">272.114</div>
<div class="t " style="top:862px;left:1549px;width:68px;text-align:right;color:#2f2f2f;letter-spacing:-0.6px;margin-right:-0.5px;">0.000</div>
<div class="t " style="top:862px;left:1619px;width:87px;text-align:right;color:#2f2f2f;letter-spacing:-0.6px;margin-right:-0.5px;">244.902</div>
<div class="t " style="top:862px;left:1708px;width:68px;text-align:right;color:#2f2f2f;letter-spacing:-0.6px;margin-right:-0.5px;">0.409</div>
<div class="t " style="top:862px;left:1780px;width:102px;text-align:center;color:#2f2f2f;">Show Report</div>
<div class="t " style="top:889px;left:29px;width:95px;text-align:right;color:#2f2f2f;letter-spacing:-0.6px;margin-right:-0.5px;">0</div>
<div class="t " style="top:889px;left:126px;width:95px;text-align:right;color:#2f2f2f;letter-spacing:-0.6px;margin-right:-0.5px;">83</div>
<div class="t " style="top:889px;left:223px;width:96px;text-align:right;color:#2f2f2f;letter-spacing:-0.6px;margin-right:-0.5px;">0.000</div>
<div class="t " style="top:889px;left:321px;width:110px;text-align:right;color:#2f2f2f;letter-spacing:-0.6px;margin-right:-0.5px;">200.000</div>
<div class="t " style="top:889px;left:433px;width:169px;text-align:right;color:#2f2f2f;letter-spacing:-0.6px;margin-right:-0.5px;">0.259</div>
<div class="t " style="top:889px;left:604px;width:169px;text-align:right;color:#2f2f2f;letter-spacing:-0.6px;margin-right:-0.5px;">0.409</div>
<div class="t " style="top:889px;left:775px;width:96px;text-align:right;color:#2f2f2f;letter-spacing:-0.6px;margin-right:-0.5px;">9</div>
<div class="t " style="top:889px;left:873px;width:77px;text-align:right;color:#2f2f2f;letter-spacing:-0.6px;margin-right:-0.5px;">-14.422</div>
<div class="t " style="top:889px;left:952px;width:114px;text-align:right;color:#2f2f2f;letter-spacing:-0.6px;margin-right:-0.5px;">51.847</div>
<div class="t " style="top:889px;left:1068px;width:104px;text-align:right;color:#2f2f2f;letter-spacing:-0.6px;margin-right:-0.5px;">81.824</div>
<div class="r" style="left:1213px;top:890px;width:14px;height:14px;box-sizing:border-box;border:1px solid #a3a3a3;background:#fff;"></div>
<svg style="left:1213px;top:890px" width="14" height="14"><path d="M3.4 7.9 L5.9 10.2 L10.4 4.8" fill="none" stroke="#8a8a8a" stroke-width="1.3"/></svg>
<div class="t " style="top:889px;left:1263px;width:68px;text-align:right;color:#2f2f2f;letter-spacing:-0.6px;margin-right:-0.5px;">365.611</div>
<div class="t " style="top:889px;left:1333px;width:74px;text-align:right;color:#2f2f2f;letter-spacing:-0.6px;margin-right:-0.5px;">0.000</div>
<div class="t " style="top:889px;left:1409px;width:68px;text-align:right;color:#2f2f2f;letter-spacing:-0.6px;margin-right:-0.5px;">433.590</div>
<div class="t " style="top:889px;left:1479px;width:68px;text-align:right;color:#2f2f2f;letter-spacing:-0.6px;margin-right:-0.5px;">272.114</div>
<div class="t " style="top:889px;left:1549px;width:68px;text-align:right;color:#2f2f2f;letter-spacing:-0.6px;margin-right:-0.5px;">0.000</div>
<div class="t " style="top:889px;left:1619px;width:87px;text-align:right;color:#2f2f2f;letter-spacing:-0.6px;margin-right:-0.5px;">244.902</div>
<div class="t " style="top:889px;left:1708px;width:68px;text-align:right;color:#2f2f2f;letter-spacing:-0.6px;margin-right:-0.5px;">0.409</div>
<div class="t " style="top:889px;left:1780px;width:102px;text-align:center;color:#2f2f2f;">Show Report</div>
<div class="t " style="top:916px;left:29px;width:95px;text-align:right;color:#2f2f2f;letter-spacing:-0.6px;margin-right:-0.5px;">0</div>
<div class="t " style="top:916px;left:126px;width:95px;text-align:right;color:#2f2f2f;letter-spacing:-0.6px;margin-right:-0.5px;">83</div>
<div class="t " style="top:916px;left:223px;width:96px;text-align:right;color:#2f2f2f;letter-spacing:-0.6px;margin-right:-0.5px;">10.598</div>
<div class="t " style="top:916px;left:321px;width:110px;text-align:right;color:#2f2f2f;letter-spacing:-0.6px;margin-right:-0.5px;">200.000</div>
<div class="t " style="top:916px;left:433px;width:169px;text-align:right;color:#2f2f2f;letter-spacing:-0.6px;margin-right:-0.5px;">0.259</div>
<div class="t " style="top:916px;left:604px;width:169px;text-align:right;color:#2f2f2f;letter-spacing:-0.6px;margin-right:-0.5px;">0.409</div>
<div class="t " style="top:916px;left:775px;width:96px;text-align:right;color:#2f2f2f;letter-spacing:-0.6px;margin-right:-0.5px;">9</div>
<div class="t " style="top:916px;left:873px;width:77px;text-align:right;color:#2f2f2f;letter-spacing:-0.6px;margin-right:-0.5px;">-14.385</div>
<div class="t " style="top:916px;left:952px;width:114px;text-align:right;color:#2f2f2f;letter-spacing:-0.6px;margin-right:-0.5px;">51.847</div>
<div class="t " style="top:916px;left:1068px;width:104px;text-align:right;color:#2f2f2f;letter-spacing:-0.6px;margin-right:-0.5px;">81.824</div>
<div class="r" style="left:1213px;top:917px;width:14px;height:14px;box-sizing:border-box;border:1px solid #a3a3a3;background:#fff;"></div>
<svg style="left:1213px;top:917px" width="14" height="14"><path d="M3.4 7.9 L5.9 10.2 L10.4 4.8" fill="none" stroke="#8a8a8a" stroke-width="1.3"/></svg>
<div class="t " style="top:916px;left:1263px;width:68px;text-align:right;color:#2f2f2f;letter-spacing:-0.6px;margin-right:-0.5px;">365.611</div>
<div class="t " style="top:916px;left:1333px;width:74px;text-align:right;color:#2f2f2f;letter-spacing:-0.6px;margin-right:-0.5px;">0.000</div>
<div class="t " style="top:916px;left:1409px;width:68px;text-align:right;color:#2f2f2f;letter-spacing:-0.6px;margin-right:-0.5px;">433.590</div>
<div class="t " style="top:916px;left:1479px;width:68px;text-align:right;color:#2f2f2f;letter-spacing:-0.6px;margin-right:-0.5px;">272.114</div>
<div class="t " style="top:916px;left:1549px;width:68px;text-align:right;color:#2f2f2f;letter-spacing:-0.6px;margin-right:-0.5px;">0.000</div>
<div class="t " style="top:916px;left:1619px;width:87px;text-align:right;color:#2f2f2f;letter-spacing:-0.6px;margin-right:-0.5px;">244.902</div>
<div class="t " style="top:916px;left:1708px;width:68px;text-align:right;color:#2f2f2f;letter-spacing:-0.6px;margin-right:-0.5px;">0.409</div>
<div class="t " style="top:916px;left:1780px;width:102px;text-align:center;color:#2f2f2f;">Show Report</div>
<div class="t " style="top:943px;left:29px;width:95px;text-align:right;color:#2f2f2f;letter-spacing:-0.6px;margin-right:-0.5px;">0</div>
<div class="t " style="top:943px;left:126px;width:95px;text-align:right;color:#2f2f2f;letter-spacing:-0.6px;margin-right:-0.5px;">83</div>
<div class="t " style="top:943px;left:223px;width:96px;text-align:right;color:#2f2f2f;letter-spacing:-0.6px;margin-right:-0.5px;">21.196</div>
<div class="t " style="top:943px;left:321px;width:110px;text-align:right;color:#2f2f2f;letter-spacing:-0.6px;margin-right:-0.5px;">200.000</div>
<div class="t " style="top:943px;left:433px;width:169px;text-align:right;color:#2f2f2f;letter-spacing:-0.6px;margin-right:-0.5px;">0.259</div>
<div class="t " style="top:943px;left:604px;width:169px;text-align:right;color:#2f2f2f;letter-spacing:-0.6px;margin-right:-0.5px;">0.409</div>
<div class="t " style="top:943px;left:775px;width:96px;text-align:right;color:#2f2f2f;letter-spacing:-0.6px;margin-right:-0.5px;">9</div>
<div class="t " style="top:943px;left:873px;width:77px;text-align:right;color:#2f2f2f;letter-spacing:-0.6px;margin-right:-0.5px;">-14.348</div>
<div class="t " style="top:943px;left:952px;width:114px;text-align:right;color:#2f2f2f;letter-spacing:-0.6px;margin-right:-0.5px;">51.847</div>
<div class="t " style="top:943px;left:1068px;width:104px;text-align:right;color:#2f2f2f;letter-spacing:-0.6px;margin-right:-0.5px;">81.824</div>
<div class="r" style="left:1213px;top:944px;width:14px;height:14px;box-sizing:border-box;border:1px solid #a3a3a3;background:#fff;"></div>
<svg style="left:1213px;top:944px" width="14" height="14"><path d="M3.4 7.9 L5.9 10.2 L10.4 4.8" fill="none" stroke="#8a8a8a" stroke-width="1.3"/></svg>
<div class="t " style="top:943px;left:1263px;width:68px;text-align:right;color:#2f2f2f;letter-spacing:-0.6px;margin-right:-0.5px;">365.611</div>
<div class="t " style="top:943px;left:1333px;width:74px;text-align:right;color:#2f2f2f;letter-spacing:-0.6px;margin-right:-0.5px;">0.000</div>
<div class="t " style="top:943px;left:1409px;width:68px;text-align:right;color:#2f2f2f;letter-spacing:-0.6px;margin-right:-0.5px;">433.590</div>
<div class="t " style="top:943px;left:1479px;width:68px;text-align:right;color:#2f2f2f;letter-spacing:-0.6px;margin-right:-0.5px;">272.114</div>
<div class="t " style="top:943px;left:1549px;width:68px;text-align:right;color:#2f2f2f;letter-spacing:-0.6px;margin-right:-0.5px;">0.000</div>
<div class="t " style="top:943px;left:1619px;width:87px;text-align:right;color:#2f2f2f;letter-spacing:-0.6px;margin-right:-0.5px;">244.902</div>
<div class="t " style="top:943px;left:1708px;width:68px;text-align:right;color:#2f2f2f;letter-spacing:-0.6px;margin-right:-0.5px;">0.409</div>
<div class="t " style="top:943px;left:1780px;width:102px;text-align:center;color:#2f2f2f;">Show Report</div>
<div class="t " style="top:970px;left:29px;width:95px;text-align:right;color:#2f2f2f;letter-spacing:-0.6px;margin-right:-0.5px;">0</div>
<div class="t " style="top:970px;left:126px;width:95px;text-align:right;color:#2f2f2f;letter-spacing:-0.6px;margin-right:-0.5px;">84</div>
<div class="t " style="top:970px;left:223px;width:96px;text-align:right;color:#2f2f2f;letter-spacing:-0.6px;margin-right:-0.5px;">0.000</div>
<div class="t " style="top:970px;left:321px;width:110px;text-align:right;color:#2f2f2f;letter-spacing:-0.6px;margin-right:-0.5px;">200.000</div>
<div class="t " style="top:970px;left:433px;width:169px;text-align:right;color:#2f2f2f;letter-spacing:-0.6px;margin-right:-0.5px;">0.259</div>
<div class="t " style="top:970px;left:604px;width:169px;text-align:right;color:#2f2f2f;letter-spacing:-0.6px;margin-right:-0.5px;">0.409</div>
<div class="t " style="top:970px;left:775px;width:96px;text-align:right;color:#2f2f2f;letter-spacing:-0.6px;margin-right:-0.5px;">9</div>
<div class="t " style="top:970px;left:873px;width:77px;text-align:right;color:#2f2f2f;letter-spacing:-0.6px;margin-right:-0.5px;">-18.389</div>
<div class="t " style="top:970px;left:952px;width:114px;text-align:right;color:#2f2f2f;letter-spacing:-0.6px;margin-right:-0.5px;">51.847</div>
<div class="t " style="top:970px;left:1068px;width:104px;text-align:right;color:#2f2f2f;letter-spacing:-0.6px;margin-right:-0.5px;">81.824</div>
<div class="r" style="left:1213px;top:971px;width:14px;height:14px;box-sizing:border-box;border:1px solid #a3a3a3;background:#fff;"></div>
<svg style="left:1213px;top:971px" width="14" height="14"><path d="M3.4 7.9 L5.9 10.2 L10.4 4.8" fill="none" stroke="#8a8a8a" stroke-width="1.3"/></svg>
<div class="t " style="top:970px;left:1263px;width:68px;text-align:right;color:#2f2f2f;letter-spacing:-0.6px;margin-right:-0.5px;">365.611</div>
<div class="t " style="top:970px;left:1333px;width:74px;text-align:right;color:#2f2f2f;letter-spacing:-0.6px;margin-right:-0.5px;">0.000</div>
<div class="t " style="top:970px;left:1409px;width:68px;text-align:right;color:#2f2f2f;letter-spacing:-0.6px;margin-right:-0.5px;">433.590</div>
<div class="t " style="top:970px;left:1479px;width:68px;text-align:right;color:#2f2f2f;letter-spacing:-0.6px;margin-right:-0.5px;">272.114</div>
<div class="t " style="top:970px;left:1549px;width:68px;text-align:right;color:#2f2f2f;letter-spacing:-0.6px;margin-right:-0.5px;">0.000</div>
<div class="t " style="top:970px;left:1619px;width:87px;text-align:right;color:#2f2f2f;letter-spacing:-0.6px;margin-right:-0.5px;">244.902</div>
<div class="t " style="top:970px;left:1708px;width:68px;text-align:right;color:#2f2f2f;letter-spacing:-0.6px;margin-right:-0.5px;">0.409</div>
<div class="t " style="top:970px;left:1780px;width:102px;text-align:center;color:#2f2f2f;">Show Report</div>
<div class="t " style="top:997px;left:29px;width:95px;text-align:right;color:#2f2f2f;letter-spacing:-0.6px;margin-right:-0.5px;">0</div>
<div class="t " style="top:997px;left:126px;width:95px;text-align:right;color:#2f2f2f;letter-spacing:-0.6px;margin-right:-0.5px;">84</div>
<div class="t " style="top:997px;left:223px;width:96px;text-align:right;color:#2f2f2f;letter-spacing:-0.6px;margin-right:-0.5px;">10.598</div>
<div class="t " style="top:997px;left:321px;width:110px;text-align:right;color:#2f2f2f;letter-spacing:-0.6px;margin-right:-0.5px;">200.000</div>
<div class="t " style="top:997px;left:433px;width:169px;text-align:right;color:#2f2f2f;letter-spacing:-0.6px;margin-right:-0.5px;">0.259</div>
<div class="t " style="top:997px;left:604px;width:169px;text-align:right;color:#2f2f2f;letter-spacing:-0.6px;margin-right:-0.5px;">0.409</div>
<div class="t " style="top:997px;left:775px;width:96px;text-align:right;color:#2f2f2f;letter-spacing:-0.6px;margin-right:-0.5px;">9</div>
<div class="t " style="top:997px;left:873px;width:77px;text-align:right;color:#2f2f2f;letter-spacing:-0.6px;margin-right:-0.5px;">-18.352</div>
<div class="t " style="top:997px;left:952px;width:114px;text-align:right;color:#2f2f2f;letter-spacing:-0.6px;margin-right:-0.5px;">51.847</div>
<div class="t " style="top:997px;left:1068px;width:104px;text-align:right;color:#2f2f2f;letter-spacing:-0.6px;margin-right:-0.5px;">81.824</div>
<div class="r" style="left:1213px;top:998px;width:14px;height:14px;box-sizing:border-box;border:1px solid #a3a3a3;background:#fff;"></div>
<svg style="left:1213px;top:998px" width="14" height="14"><path d="M3.4 7.9 L5.9 10.2 L10.4 4.8" fill="none" stroke="#8a8a8a" stroke-width="1.3"/></svg>
<div class="t " style="top:997px;left:1263px;width:68px;text-align:right;color:#2f2f2f;letter-spacing:-0.6px;margin-right:-0.5px;">365.611</div>
<div class="t " style="top:997px;left:1333px;width:74px;text-align:right;color:#2f2f2f;letter-spacing:-0.6px;margin-right:-0.5px;">0.000</div>
<div class="t " style="top:997px;left:1409px;width:68px;text-align:right;color:#2f2f2f;letter-spacing:-0.6px;margin-right:-0.5px;">433.590</div>
<div class="t " style="top:997px;left:1479px;width:68px;text-align:right;color:#2f2f2f;letter-spacing:-0.6px;margin-right:-0.5px;">272.114</div>
<div class="t " style="top:997px;left:1549px;width:68px;text-align:right;color:#2f2f2f;letter-spacing:-0.6px;margin-right:-0.5px;">0.000</div>
<div class="t " style="top:997px;left:1619px;width:87px;text-align:right;color:#2f2f2f;letter-spacing:-0.6px;margin-right:-0.5px;">244.902</div>
<div class="t " style="top:997px;left:1708px;width:68px;text-align:right;color:#2f2f2f;letter-spacing:-0.6px;margin-right:-0.5px;">0.409</div>
<div class="t " style="top:997px;left:1780px;width:102px;text-align:center;color:#2f2f2f;">Show Report</div>
<svg style="left:16px;top:406px" width="8" height="10"><path d="M1 1 L5 5 L1 9 Z" fill="#7a7a7a"/></svg>
<div class="r" style="left:1884px;top:399px;width:15px;height:16px;background:#ffffff;box-sizing:border-box;border:1px solid #a9a9a9;"></div>
<div class="r" style="left:1884px;top:415px;width:15px;height:39px;background:#ffffff;box-sizing:border-box;border:1px solid #a9a9a9;"></div>
<div class="r" style="left:1884px;top:999px;width:15px;height:16px;background:#ffffff;box-sizing:border-box;border:1px solid #a9a9a9;"></div>
<svg style="left:1887px;top:403px" width="10" height="6"><path d="M1 5 H8 L4.5 1.5 Z" fill="#808080"/></svg>
<svg style="left:1887px;top:1005px" width="10" height="6"><path d="M1 1 H8 L4.5 4.5 Z" fill="#808080"/></svg>
<div class="r" style="left:6px;top:346px;width:1896px;height:672px;box-sizing:border-box;border:2px solid #a6a6a6;"></div>
<div class="r" style="left:56px;top:346px;width:84px;height:1px;background:#f9f9f9;"></div>
</body></html>
